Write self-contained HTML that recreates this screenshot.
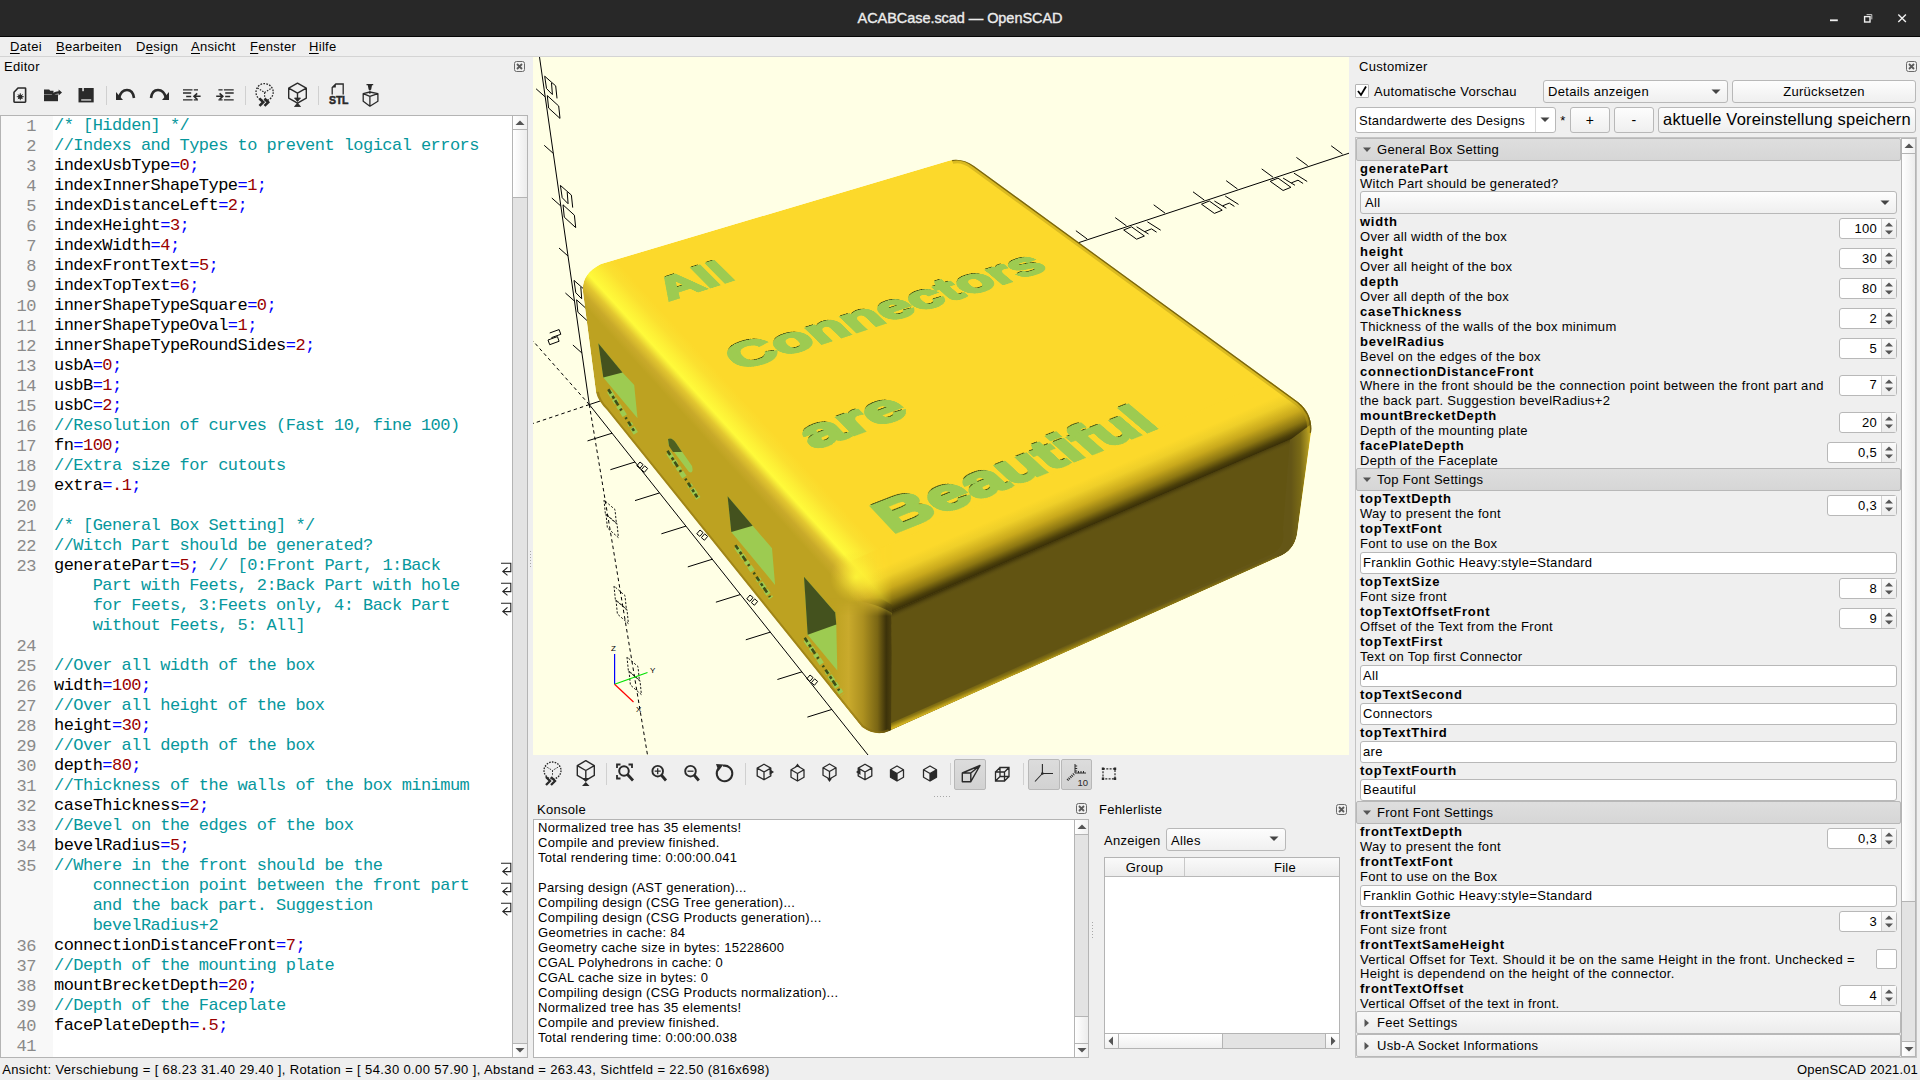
<!DOCTYPE html><html><head><meta charset="utf-8"><style>
html,body{margin:0;padding:0;}
body{width:1920px;height:1080px;position:relative;overflow:hidden;background:#efefef;font-family:'Liberation Sans',sans-serif;}
.a{position:absolute;}
.t{white-space:pre;}
u{text-decoration:underline;text-underline-offset:2px;}
</style></head><body>
<div class="a" style="left:0px;top:0px;width:1920px;height:37px;background:#282828;"></div>
<div class="a" style="left:0px;top:36px;width:1920px;height:1px;background:#050505;"></div>
<div class="a t" style="left:760.0px;top:8.46px;font-size:14.5px;color:#ececec;letter-spacing:-0.06px;line-height:20px;width:400px;text-align:center;-webkit-text-stroke:0.35px #ececec;">ACABCase.scad — OpenSCAD</div>
<svg class="a" style="left:1820px;top:0px" width="100" height="36"><line x1="10" y1="20.3" x2="17.8" y2="20.3" stroke="#f0f0f0" stroke-width="1.8"/><rect x="44.6" y="16.6" width="5.4" height="5.4" fill="none" stroke="#f0f0f0" stroke-width="1.4"/><path d="M46.6 14.6 H51.8 V19.4" fill="none" stroke="#c8c8c8" stroke-width="1"/><path d="M78.3 14.6 L85.9 21.9 M85.9 14.6 L78.3 21.9" stroke="#f0f0f0" stroke-width="1.4"/></svg>
<div class="a" style="left:0px;top:56px;width:1920px;height:1px;background:#d4d4d4;"></div>
<div class="a t" style="left:10px;top:37.00px;font-size:13px;color:#000;letter-spacing:0.3px;line-height:20px;"><u>D</u>atei</div>
<div class="a t" style="left:56px;top:37.00px;font-size:13px;color:#000;letter-spacing:0.3px;line-height:20px;"><u>B</u>earbeiten</div>
<div class="a t" style="left:136px;top:37.00px;font-size:13px;color:#000;letter-spacing:0.3px;line-height:20px;">D<u>e</u>sign</div>
<div class="a t" style="left:191px;top:37.00px;font-size:13px;color:#000;letter-spacing:0.3px;line-height:20px;"><u>A</u>nsicht</div>
<div class="a t" style="left:250px;top:37.00px;font-size:13px;color:#000;letter-spacing:0.3px;line-height:20px;"><u>F</u>enster</div>
<div class="a t" style="left:309px;top:37.00px;font-size:13px;color:#000;letter-spacing:0.3px;line-height:20px;"><u>H</u>ilfe</div>
<div class="a t" style="left:4px;top:57.00px;font-size:13px;color:#000;letter-spacing:0.3px;line-height:20px;">Editor</div>
<svg class="a" style="left:514px;top:61px" width="12" height="12"><rect x="0.5" y="0.5" width="10" height="10" rx="2" fill="none" stroke="#6a6a6a" stroke-width="1"/><path d="M3 3 L8 8 M8 3 L3 8" stroke="#5a5a5a" stroke-width="1.8"/></svg>
<svg class="a" style="left:13px;top:87px" width="15" height="17" viewBox="0 0 15 17"><path d="M1 5.2 L5 1 H12 Q12.6 1 12.6 1.6 V14.6 Q12.6 15.2 12 15.2 H1.6 Q1 15.2 1 14.6 Z" fill="none" stroke="#2a2a2a" stroke-width="1.6" stroke-linejoin="round"/><circle cx="7.3" cy="9.7" r="2.3" fill="#2a2a2a"/><path d="M7.3 6.2 V13.2 M3.8 9.7 H10.8 M4.9 7.3 L9.7 12.1 M9.7 7.3 L4.9 12.1" stroke="#2a2a2a" stroke-width="0.9"/></svg>
<svg class="a" style="left:43px;top:88px" width="20" height="15" viewBox="0 0 20 15"><path d="M1 1.5 H6.2 L7.2 2.8 H10.5 V6 H1 Z" fill="#2a2a2a"/><path d="M1 6.4 H15 V13.2 H1 Z" fill="#2a2a2a"/><path d="M9.5 7 Q12 4.3 16 4.3" fill="none" stroke="#2a2a2a" stroke-width="2.2"/><path d="M15.6 1.4 L19 4.4 L15.6 7.4 Z" fill="#2a2a2a"/></svg>
<svg class="a" style="left:78px;top:88px" width="16" height="15" viewBox="0 0 16 15"><path d="M0.5 -0.6 H15.7 V14.4 H0.5 Z" fill="#2a2a2a"/><rect x="4.3" y="-0.6" width="1.5" height="3.8" fill="#efefef"/><rect x="3.2" y="11.2" width="10" height="1.5" fill="#c8c8c8"/></svg>
<div class="a" style="left:106px;top:86px;width:1px;height:19px;background:#d0d0d0;"></div>
<svg class="a" style="left:116px;top:87px" width="20" height="16" viewBox="0 0 20 16"><path d="M3 11 Q5 3 11 3 Q17 3 18 11" fill="none" stroke="#2a2a2a" stroke-width="2.6"/><path d="M0 5 L7 13 L0 13 Z" fill="#2a2a2a"/></svg>
<svg class="a" style="left:149px;top:87px" width="20" height="16" viewBox="0 0 20 16"><path d="M2 11 Q3 3 9 3 Q15 3 17 11" fill="none" stroke="#2a2a2a" stroke-width="2.6"/><path d="M20 5 L13 13 L20 13 Z" fill="#2a2a2a"/></svg>
<svg class="a" style="left:182px;top:87px" width="20" height="16" viewBox="0 0 20 16"><path d="M1 2.9 H10.5 M11.8 2.9 H16 M1 6 H9.2 M4.2 9.5 H9.2 M1 12.9 H10.5 M11.8 12.9 H16" stroke="#2a2a2a" stroke-width="1.4"/><path d="M12.2 9.3 H18.6 M15.2 6.3 L12 9.3 L15.2 12.3" fill="none" stroke="#2a2a2a" stroke-width="1.6"/></svg>
<svg class="a" style="left:215px;top:87px" width="20" height="16" viewBox="0 0 20 16"><path d="M3.4 2.9 H7.6 M8.9 2.9 H18.7 M10.2 6 H18.7 M10.2 9.5 H15.2 M3.4 12.9 H7.6 M8.9 12.9 H18.7" stroke="#2a2a2a" stroke-width="1.4"/><path d="M1.2 9.3 H7.6 M4.6 6.3 L7.8 9.3 L4.6 12.3" fill="none" stroke="#2a2a2a" stroke-width="1.6"/></svg>
<div class="a" style="left:245px;top:86px;width:1px;height:19px;background:#d0d0d0;"></div>
<svg class="a" style="left:253px;top:80px" width="24" height="28" viewBox="0 0 24 28"><circle cx="11.6" cy="12.2" r="8.6" fill="none" stroke="#2a2a2a" stroke-width="1.3" stroke-dasharray="1.7 1.3"/><path d="M4.5 8 L11.6 12.5 L18.7 8 M11.6 12.5 V17" fill="none" stroke="#2a2a2a" stroke-width="1.2" stroke-dasharray="1.5 1.3"/><path d="M6.5 18.5 L10.2 22.2 L6.5 25.9 M11.5 18.5 L15.2 22.2 L11.5 25.9" fill="none" stroke="#2a2a2a" stroke-width="2.6"/></svg>
<svg class="a" style="left:287px;top:81px" width="22" height="28" viewBox="0 0 22 28"><path d="M10.5 2.2 L19.3 7.2 V17.2 L10.5 22.2 L1.7 17.2 V7.2 Z M1.7 7.2 L10.5 12.2 L19.3 7.2 M10.5 12.2 V17" fill="none" stroke="#2a2a2a" stroke-width="1.4" stroke-linejoin="round"/><path d="M7.5 17 H13.5 L10.5 20.5 Z M7.5 25.5 H13.5 L10.5 22 Z M10.5 15 V17" fill="#2a2a2a" stroke="#2a2a2a" stroke-width="0.8"/></svg>
<div class="a" style="left:318px;top:86px;width:1px;height:19px;background:#d0d0d0;"></div>
<svg class="a" style="left:327px;top:82px" width="24" height="24" viewBox="0 0 24 24"><path d="M5.2 12.5 V5.5 L8.8 2 H16.2 V12.5" fill="none" stroke="#2a2a2a" stroke-width="1.3"/><path d="M5.2 5.5 L8.8 2 V5.5 Z" fill="#2a2a2a"/><text x="11.7" y="22.4" font-family="Liberation Sans" font-weight="bold" font-size="10.5" text-anchor="middle" fill="#2a2a2a" stroke="#2a2a2a" stroke-width="0.5" letter-spacing="-0.2">STL</text></svg>
<svg class="a" style="left:361px;top:82px" width="19" height="26" viewBox="0 0 19 26"><path d="M5.5 1.9 H12.2 V3.2 H11 L10.2 7.6 Q8.9 9 7.6 7.6 L6.8 3.2 H5.5 Z" fill="#2a2a2a"/><path d="M8.9 8.5 V12" stroke="#2a2a2a" stroke-width="1"/><path d="M2.2 11.7 L8.9 10 L16.9 11.7 V19.3 L8.9 24.2 L2.2 19.3 Z M2.2 11.7 L8.9 14.4 L16.9 11.7 M8.9 14.4 V24.2" fill="none" stroke="#2a2a2a" stroke-width="1.3" stroke-linejoin="round"/></svg>
<div class="a" style="left:0px;top:115px;width:528px;height:943px;background:#ffffff;border:1px solid #b4b4b4;box-sizing:border-box;"></div>
<div class="a" style="left:1px;top:116px;width:52px;height:941px;background:#f8f8f8;"></div>
<div class="a" style="left:512px;top:115px;width:16px;height:943px;background:#e3e3e3;border:1px solid #b4b4b4;box-sizing:border-box;"></div>
<div class="a" style="left:512px;top:115px;width:16px;height:15px;background:linear-gradient(90deg,#ffffff,#f0f0f0);border:1px solid #b4b4b4;box-sizing:border-box;"></div>
<svg class="a" style="left:514px;top:118px" width="12" height="10"><path d="M1.5 7 L6 2.5 L10.5 7 Z" fill="#555"/></svg>
<div class="a" style="left:512px;top:129px;width:16px;height:69px;background:linear-gradient(90deg,#ffffff,#ececec);border:1px solid #b4b4b4;box-sizing:border-box;"></div>
<div class="a" style="left:512px;top:1043px;width:16px;height:15px;background:linear-gradient(90deg,#ffffff,#f0f0f0);border:1px solid #b4b4b4;box-sizing:border-box;"></div>
<svg class="a" style="left:514px;top:1045px" width="12" height="10"><path d="M1.5 3 L6 7.5 L10.5 3 Z" fill="#555"/></svg>
<div class="a t" style="left:2px;top:116.8px;width:33.8px;text-align:right;font-family:'Liberation Mono', monospace;font-size:17px;letter-spacing:-0.545px;line-height:20px;color:#8a8a8a">1</div>
<div class="a t" style="left:54px;top:116.0px;font-family:'Liberation Mono', monospace;font-size:17px;letter-spacing:-0.545px;line-height:20px;color:#000"><span style="color:#06979c">/* [Hidden] */</span></div>
<div class="a t" style="left:2px;top:136.8px;width:33.8px;text-align:right;font-family:'Liberation Mono', monospace;font-size:17px;letter-spacing:-0.545px;line-height:20px;color:#8a8a8a">2</div>
<div class="a t" style="left:54px;top:136.0px;font-family:'Liberation Mono', monospace;font-size:17px;letter-spacing:-0.545px;line-height:20px;color:#000"><span style="color:#06979c">//Indexs and Types to prevent logical errors</span></div>
<div class="a t" style="left:2px;top:156.8px;width:33.8px;text-align:right;font-family:'Liberation Mono', monospace;font-size:17px;letter-spacing:-0.545px;line-height:20px;color:#8a8a8a">3</div>
<div class="a t" style="left:54px;top:156.0px;font-family:'Liberation Mono', monospace;font-size:17px;letter-spacing:-0.545px;line-height:20px;color:#000">indexUsbType<span style="color:#0000ff">=</span><span style="color:#9a0000">0</span><span style="color:#0000ff">;</span></div>
<div class="a t" style="left:2px;top:176.8px;width:33.8px;text-align:right;font-family:'Liberation Mono', monospace;font-size:17px;letter-spacing:-0.545px;line-height:20px;color:#8a8a8a">4</div>
<div class="a t" style="left:54px;top:176.0px;font-family:'Liberation Mono', monospace;font-size:17px;letter-spacing:-0.545px;line-height:20px;color:#000">indexInnerShapeType<span style="color:#0000ff">=</span><span style="color:#9a0000">1</span><span style="color:#0000ff">;</span></div>
<div class="a t" style="left:2px;top:196.8px;width:33.8px;text-align:right;font-family:'Liberation Mono', monospace;font-size:17px;letter-spacing:-0.545px;line-height:20px;color:#8a8a8a">5</div>
<div class="a t" style="left:54px;top:196.0px;font-family:'Liberation Mono', monospace;font-size:17px;letter-spacing:-0.545px;line-height:20px;color:#000">indexDistanceLeft<span style="color:#0000ff">=</span><span style="color:#9a0000">2</span><span style="color:#0000ff">;</span></div>
<div class="a t" style="left:2px;top:216.8px;width:33.8px;text-align:right;font-family:'Liberation Mono', monospace;font-size:17px;letter-spacing:-0.545px;line-height:20px;color:#8a8a8a">6</div>
<div class="a t" style="left:54px;top:216.0px;font-family:'Liberation Mono', monospace;font-size:17px;letter-spacing:-0.545px;line-height:20px;color:#000">indexHeight<span style="color:#0000ff">=</span><span style="color:#9a0000">3</span><span style="color:#0000ff">;</span></div>
<div class="a t" style="left:2px;top:236.8px;width:33.8px;text-align:right;font-family:'Liberation Mono', monospace;font-size:17px;letter-spacing:-0.545px;line-height:20px;color:#8a8a8a">7</div>
<div class="a t" style="left:54px;top:236.0px;font-family:'Liberation Mono', monospace;font-size:17px;letter-spacing:-0.545px;line-height:20px;color:#000">indexWidth<span style="color:#0000ff">=</span><span style="color:#9a0000">4</span><span style="color:#0000ff">;</span></div>
<div class="a t" style="left:2px;top:256.8px;width:33.8px;text-align:right;font-family:'Liberation Mono', monospace;font-size:17px;letter-spacing:-0.545px;line-height:20px;color:#8a8a8a">8</div>
<div class="a t" style="left:54px;top:256.0px;font-family:'Liberation Mono', monospace;font-size:17px;letter-spacing:-0.545px;line-height:20px;color:#000">indexFrontText<span style="color:#0000ff">=</span><span style="color:#9a0000">5</span><span style="color:#0000ff">;</span></div>
<div class="a t" style="left:2px;top:276.8px;width:33.8px;text-align:right;font-family:'Liberation Mono', monospace;font-size:17px;letter-spacing:-0.545px;line-height:20px;color:#8a8a8a">9</div>
<div class="a t" style="left:54px;top:276.0px;font-family:'Liberation Mono', monospace;font-size:17px;letter-spacing:-0.545px;line-height:20px;color:#000">indexTopText<span style="color:#0000ff">=</span><span style="color:#9a0000">6</span><span style="color:#0000ff">;</span></div>
<div class="a t" style="left:2px;top:296.8px;width:33.8px;text-align:right;font-family:'Liberation Mono', monospace;font-size:17px;letter-spacing:-0.545px;line-height:20px;color:#8a8a8a">10</div>
<div class="a t" style="left:54px;top:296.0px;font-family:'Liberation Mono', monospace;font-size:17px;letter-spacing:-0.545px;line-height:20px;color:#000">innerShapeTypeSquare<span style="color:#0000ff">=</span><span style="color:#9a0000">0</span><span style="color:#0000ff">;</span></div>
<div class="a t" style="left:2px;top:316.8px;width:33.8px;text-align:right;font-family:'Liberation Mono', monospace;font-size:17px;letter-spacing:-0.545px;line-height:20px;color:#8a8a8a">11</div>
<div class="a t" style="left:54px;top:316.0px;font-family:'Liberation Mono', monospace;font-size:17px;letter-spacing:-0.545px;line-height:20px;color:#000">innerShapeTypeOval<span style="color:#0000ff">=</span><span style="color:#9a0000">1</span><span style="color:#0000ff">;</span></div>
<div class="a t" style="left:2px;top:336.8px;width:33.8px;text-align:right;font-family:'Liberation Mono', monospace;font-size:17px;letter-spacing:-0.545px;line-height:20px;color:#8a8a8a">12</div>
<div class="a t" style="left:54px;top:336.0px;font-family:'Liberation Mono', monospace;font-size:17px;letter-spacing:-0.545px;line-height:20px;color:#000">innerShapeTypeRoundSides<span style="color:#0000ff">=</span><span style="color:#9a0000">2</span><span style="color:#0000ff">;</span></div>
<div class="a t" style="left:2px;top:356.8px;width:33.8px;text-align:right;font-family:'Liberation Mono', monospace;font-size:17px;letter-spacing:-0.545px;line-height:20px;color:#8a8a8a">13</div>
<div class="a t" style="left:54px;top:356.0px;font-family:'Liberation Mono', monospace;font-size:17px;letter-spacing:-0.545px;line-height:20px;color:#000">usbA<span style="color:#0000ff">=</span><span style="color:#9a0000">0</span><span style="color:#0000ff">;</span></div>
<div class="a t" style="left:2px;top:376.8px;width:33.8px;text-align:right;font-family:'Liberation Mono', monospace;font-size:17px;letter-spacing:-0.545px;line-height:20px;color:#8a8a8a">14</div>
<div class="a t" style="left:54px;top:376.0px;font-family:'Liberation Mono', monospace;font-size:17px;letter-spacing:-0.545px;line-height:20px;color:#000">usbB<span style="color:#0000ff">=</span><span style="color:#9a0000">1</span><span style="color:#0000ff">;</span></div>
<div class="a t" style="left:2px;top:396.8px;width:33.8px;text-align:right;font-family:'Liberation Mono', monospace;font-size:17px;letter-spacing:-0.545px;line-height:20px;color:#8a8a8a">15</div>
<div class="a t" style="left:54px;top:396.0px;font-family:'Liberation Mono', monospace;font-size:17px;letter-spacing:-0.545px;line-height:20px;color:#000">usbC<span style="color:#0000ff">=</span><span style="color:#9a0000">2</span><span style="color:#0000ff">;</span></div>
<div class="a t" style="left:2px;top:416.8px;width:33.8px;text-align:right;font-family:'Liberation Mono', monospace;font-size:17px;letter-spacing:-0.545px;line-height:20px;color:#8a8a8a">16</div>
<div class="a t" style="left:54px;top:416.0px;font-family:'Liberation Mono', monospace;font-size:17px;letter-spacing:-0.545px;line-height:20px;color:#000"><span style="color:#06979c">//Resolution of curves (Fast 10, fine 100)</span></div>
<div class="a t" style="left:2px;top:436.8px;width:33.8px;text-align:right;font-family:'Liberation Mono', monospace;font-size:17px;letter-spacing:-0.545px;line-height:20px;color:#8a8a8a">17</div>
<div class="a t" style="left:54px;top:436.0px;font-family:'Liberation Mono', monospace;font-size:17px;letter-spacing:-0.545px;line-height:20px;color:#000">fn<span style="color:#0000ff">=</span><span style="color:#9a0000">100</span><span style="color:#0000ff">;</span></div>
<div class="a t" style="left:2px;top:456.8px;width:33.8px;text-align:right;font-family:'Liberation Mono', monospace;font-size:17px;letter-spacing:-0.545px;line-height:20px;color:#8a8a8a">18</div>
<div class="a t" style="left:54px;top:456.0px;font-family:'Liberation Mono', monospace;font-size:17px;letter-spacing:-0.545px;line-height:20px;color:#000"><span style="color:#06979c">//Extra size for cutouts</span></div>
<div class="a t" style="left:2px;top:476.8px;width:33.8px;text-align:right;font-family:'Liberation Mono', monospace;font-size:17px;letter-spacing:-0.545px;line-height:20px;color:#8a8a8a">19</div>
<div class="a t" style="left:54px;top:476.0px;font-family:'Liberation Mono', monospace;font-size:17px;letter-spacing:-0.545px;line-height:20px;color:#000">extra<span style="color:#0000ff">=</span><span style="color:#9a0000">.1</span><span style="color:#0000ff">;</span></div>
<div class="a t" style="left:2px;top:496.8px;width:33.8px;text-align:right;font-family:'Liberation Mono', monospace;font-size:17px;letter-spacing:-0.545px;line-height:20px;color:#8a8a8a">20</div>
<div class="a t" style="left:54px;top:496.0px;font-family:'Liberation Mono', monospace;font-size:17px;letter-spacing:-0.545px;line-height:20px;color:#000"></div>
<div class="a t" style="left:2px;top:516.8px;width:33.8px;text-align:right;font-family:'Liberation Mono', monospace;font-size:17px;letter-spacing:-0.545px;line-height:20px;color:#8a8a8a">21</div>
<div class="a t" style="left:54px;top:516.0px;font-family:'Liberation Mono', monospace;font-size:17px;letter-spacing:-0.545px;line-height:20px;color:#000"><span style="color:#06979c">/* [General Box Setting] */</span></div>
<div class="a t" style="left:2px;top:536.8px;width:33.8px;text-align:right;font-family:'Liberation Mono', monospace;font-size:17px;letter-spacing:-0.545px;line-height:20px;color:#8a8a8a">22</div>
<div class="a t" style="left:54px;top:536.0px;font-family:'Liberation Mono', monospace;font-size:17px;letter-spacing:-0.545px;line-height:20px;color:#000"><span style="color:#06979c">//Witch Part should be generated?</span></div>
<div class="a t" style="left:2px;top:556.8px;width:33.8px;text-align:right;font-family:'Liberation Mono', monospace;font-size:17px;letter-spacing:-0.545px;line-height:20px;color:#8a8a8a">23</div>
<div class="a t" style="left:54px;top:556.0px;font-family:'Liberation Mono', monospace;font-size:17px;letter-spacing:-0.545px;line-height:20px;color:#000">generatePart<span style="color:#0000ff">=</span><span style="color:#9a0000">5</span><span style="color:#0000ff">;</span> <span style="color:#06979c">// [0:Front Part, 1:Back</span></div>
<svg class="a" style="left:500px;top:561px" width="12" height="16"><path d="M1 2.2 H10.8 V10.6 H2.8 M7.5 6.4 L2.8 10.6 L7.5 14.4" fill="none" stroke="#222" stroke-width="1.1"/></svg>
<div class="a t" style="left:54px;top:576.0px;font-family:'Liberation Mono', monospace;font-size:17px;letter-spacing:-0.545px;line-height:20px;color:#000"><span style="color:#06979c">    Part with Feets, 2:Back Part with hole</span></div>
<svg class="a" style="left:500px;top:581px" width="12" height="16"><path d="M1 2.2 H10.8 V10.6 H2.8 M7.5 6.4 L2.8 10.6 L7.5 14.4" fill="none" stroke="#222" stroke-width="1.1"/></svg>
<div class="a t" style="left:54px;top:596.0px;font-family:'Liberation Mono', monospace;font-size:17px;letter-spacing:-0.545px;line-height:20px;color:#000"><span style="color:#06979c">    for Feets, 3:Feets only, 4: Back Part</span></div>
<svg class="a" style="left:500px;top:601px" width="12" height="16"><path d="M1 2.2 H10.8 V10.6 H2.8 M7.5 6.4 L2.8 10.6 L7.5 14.4" fill="none" stroke="#222" stroke-width="1.1"/></svg>
<div class="a t" style="left:54px;top:616.0px;font-family:'Liberation Mono', monospace;font-size:17px;letter-spacing:-0.545px;line-height:20px;color:#000"><span style="color:#06979c">    without Feets, 5: All]</span></div>
<div class="a t" style="left:2px;top:636.8px;width:33.8px;text-align:right;font-family:'Liberation Mono', monospace;font-size:17px;letter-spacing:-0.545px;line-height:20px;color:#8a8a8a">24</div>
<div class="a t" style="left:54px;top:636.0px;font-family:'Liberation Mono', monospace;font-size:17px;letter-spacing:-0.545px;line-height:20px;color:#000"></div>
<div class="a t" style="left:2px;top:656.8px;width:33.8px;text-align:right;font-family:'Liberation Mono', monospace;font-size:17px;letter-spacing:-0.545px;line-height:20px;color:#8a8a8a">25</div>
<div class="a t" style="left:54px;top:656.0px;font-family:'Liberation Mono', monospace;font-size:17px;letter-spacing:-0.545px;line-height:20px;color:#000"><span style="color:#06979c">//Over all width of the box</span></div>
<div class="a t" style="left:2px;top:676.8px;width:33.8px;text-align:right;font-family:'Liberation Mono', monospace;font-size:17px;letter-spacing:-0.545px;line-height:20px;color:#8a8a8a">26</div>
<div class="a t" style="left:54px;top:676.0px;font-family:'Liberation Mono', monospace;font-size:17px;letter-spacing:-0.545px;line-height:20px;color:#000">width<span style="color:#0000ff">=</span><span style="color:#9a0000">100</span><span style="color:#0000ff">;</span></div>
<div class="a t" style="left:2px;top:696.8px;width:33.8px;text-align:right;font-family:'Liberation Mono', monospace;font-size:17px;letter-spacing:-0.545px;line-height:20px;color:#8a8a8a">27</div>
<div class="a t" style="left:54px;top:696.0px;font-family:'Liberation Mono', monospace;font-size:17px;letter-spacing:-0.545px;line-height:20px;color:#000"><span style="color:#06979c">//Over all height of the box</span></div>
<div class="a t" style="left:2px;top:716.8px;width:33.8px;text-align:right;font-family:'Liberation Mono', monospace;font-size:17px;letter-spacing:-0.545px;line-height:20px;color:#8a8a8a">28</div>
<div class="a t" style="left:54px;top:716.0px;font-family:'Liberation Mono', monospace;font-size:17px;letter-spacing:-0.545px;line-height:20px;color:#000">height<span style="color:#0000ff">=</span><span style="color:#9a0000">30</span><span style="color:#0000ff">;</span></div>
<div class="a t" style="left:2px;top:736.8px;width:33.8px;text-align:right;font-family:'Liberation Mono', monospace;font-size:17px;letter-spacing:-0.545px;line-height:20px;color:#8a8a8a">29</div>
<div class="a t" style="left:54px;top:736.0px;font-family:'Liberation Mono', monospace;font-size:17px;letter-spacing:-0.545px;line-height:20px;color:#000"><span style="color:#06979c">//Over all depth of the box</span></div>
<div class="a t" style="left:2px;top:756.8px;width:33.8px;text-align:right;font-family:'Liberation Mono', monospace;font-size:17px;letter-spacing:-0.545px;line-height:20px;color:#8a8a8a">30</div>
<div class="a t" style="left:54px;top:756.0px;font-family:'Liberation Mono', monospace;font-size:17px;letter-spacing:-0.545px;line-height:20px;color:#000">depth<span style="color:#0000ff">=</span><span style="color:#9a0000">80</span><span style="color:#0000ff">;</span></div>
<div class="a t" style="left:2px;top:776.8px;width:33.8px;text-align:right;font-family:'Liberation Mono', monospace;font-size:17px;letter-spacing:-0.545px;line-height:20px;color:#8a8a8a">31</div>
<div class="a t" style="left:54px;top:776.0px;font-family:'Liberation Mono', monospace;font-size:17px;letter-spacing:-0.545px;line-height:20px;color:#000"><span style="color:#06979c">//Thickness of the walls of the box minimum</span></div>
<div class="a t" style="left:2px;top:796.8px;width:33.8px;text-align:right;font-family:'Liberation Mono', monospace;font-size:17px;letter-spacing:-0.545px;line-height:20px;color:#8a8a8a">32</div>
<div class="a t" style="left:54px;top:796.0px;font-family:'Liberation Mono', monospace;font-size:17px;letter-spacing:-0.545px;line-height:20px;color:#000">caseThickness<span style="color:#0000ff">=</span><span style="color:#9a0000">2</span><span style="color:#0000ff">;</span></div>
<div class="a t" style="left:2px;top:816.8px;width:33.8px;text-align:right;font-family:'Liberation Mono', monospace;font-size:17px;letter-spacing:-0.545px;line-height:20px;color:#8a8a8a">33</div>
<div class="a t" style="left:54px;top:816.0px;font-family:'Liberation Mono', monospace;font-size:17px;letter-spacing:-0.545px;line-height:20px;color:#000"><span style="color:#06979c">//Bevel on the edges of the box</span></div>
<div class="a t" style="left:2px;top:836.8px;width:33.8px;text-align:right;font-family:'Liberation Mono', monospace;font-size:17px;letter-spacing:-0.545px;line-height:20px;color:#8a8a8a">34</div>
<div class="a t" style="left:54px;top:836.0px;font-family:'Liberation Mono', monospace;font-size:17px;letter-spacing:-0.545px;line-height:20px;color:#000">bevelRadius<span style="color:#0000ff">=</span><span style="color:#9a0000">5</span><span style="color:#0000ff">;</span></div>
<div class="a t" style="left:2px;top:856.8px;width:33.8px;text-align:right;font-family:'Liberation Mono', monospace;font-size:17px;letter-spacing:-0.545px;line-height:20px;color:#8a8a8a">35</div>
<div class="a t" style="left:54px;top:856.0px;font-family:'Liberation Mono', monospace;font-size:17px;letter-spacing:-0.545px;line-height:20px;color:#000"><span style="color:#06979c">//Where in the front should be the</span></div>
<svg class="a" style="left:500px;top:861px" width="12" height="16"><path d="M1 2.2 H10.8 V10.6 H2.8 M7.5 6.4 L2.8 10.6 L7.5 14.4" fill="none" stroke="#222" stroke-width="1.1"/></svg>
<div class="a t" style="left:54px;top:876.0px;font-family:'Liberation Mono', monospace;font-size:17px;letter-spacing:-0.545px;line-height:20px;color:#000"><span style="color:#06979c">    connection point between the front part</span></div>
<svg class="a" style="left:500px;top:881px" width="12" height="16"><path d="M1 2.2 H10.8 V10.6 H2.8 M7.5 6.4 L2.8 10.6 L7.5 14.4" fill="none" stroke="#222" stroke-width="1.1"/></svg>
<div class="a t" style="left:54px;top:896.0px;font-family:'Liberation Mono', monospace;font-size:17px;letter-spacing:-0.545px;line-height:20px;color:#000"><span style="color:#06979c">    and the back part. Suggestion</span></div>
<svg class="a" style="left:500px;top:901px" width="12" height="16"><path d="M1 2.2 H10.8 V10.6 H2.8 M7.5 6.4 L2.8 10.6 L7.5 14.4" fill="none" stroke="#222" stroke-width="1.1"/></svg>
<div class="a t" style="left:54px;top:916.0px;font-family:'Liberation Mono', monospace;font-size:17px;letter-spacing:-0.545px;line-height:20px;color:#000"><span style="color:#06979c">    bevelRadius+2</span></div>
<div class="a t" style="left:2px;top:936.8px;width:33.8px;text-align:right;font-family:'Liberation Mono', monospace;font-size:17px;letter-spacing:-0.545px;line-height:20px;color:#8a8a8a">36</div>
<div class="a t" style="left:54px;top:936.0px;font-family:'Liberation Mono', monospace;font-size:17px;letter-spacing:-0.545px;line-height:20px;color:#000">connectionDistanceFront<span style="color:#0000ff">=</span><span style="color:#9a0000">7</span><span style="color:#0000ff">;</span></div>
<div class="a t" style="left:2px;top:956.8px;width:33.8px;text-align:right;font-family:'Liberation Mono', monospace;font-size:17px;letter-spacing:-0.545px;line-height:20px;color:#8a8a8a">37</div>
<div class="a t" style="left:54px;top:956.0px;font-family:'Liberation Mono', monospace;font-size:17px;letter-spacing:-0.545px;line-height:20px;color:#000"><span style="color:#06979c">//Depth of the mounting plate</span></div>
<div class="a t" style="left:2px;top:976.8px;width:33.8px;text-align:right;font-family:'Liberation Mono', monospace;font-size:17px;letter-spacing:-0.545px;line-height:20px;color:#8a8a8a">38</div>
<div class="a t" style="left:54px;top:976.0px;font-family:'Liberation Mono', monospace;font-size:17px;letter-spacing:-0.545px;line-height:20px;color:#000">mountBrecketDepth<span style="color:#0000ff">=</span><span style="color:#9a0000">20</span><span style="color:#0000ff">;</span></div>
<div class="a t" style="left:2px;top:996.8px;width:33.8px;text-align:right;font-family:'Liberation Mono', monospace;font-size:17px;letter-spacing:-0.545px;line-height:20px;color:#8a8a8a">39</div>
<div class="a t" style="left:54px;top:996.0px;font-family:'Liberation Mono', monospace;font-size:17px;letter-spacing:-0.545px;line-height:20px;color:#000"><span style="color:#06979c">//Depth of the Faceplate</span></div>
<div class="a t" style="left:2px;top:1016.8px;width:33.8px;text-align:right;font-family:'Liberation Mono', monospace;font-size:17px;letter-spacing:-0.545px;line-height:20px;color:#8a8a8a">40</div>
<div class="a t" style="left:54px;top:1016.0px;font-family:'Liberation Mono', monospace;font-size:17px;letter-spacing:-0.545px;line-height:20px;color:#000">facePlateDepth<span style="color:#0000ff">=</span><span style="color:#9a0000">.5</span><span style="color:#0000ff">;</span></div>
<div class="a t" style="left:2px;top:1036.8px;width:33.8px;text-align:right;font-family:'Liberation Mono', monospace;font-size:17px;letter-spacing:-0.545px;line-height:20px;color:#8a8a8a">41</div>
<div class="a t" style="left:54px;top:1036.0px;font-family:'Liberation Mono', monospace;font-size:17px;letter-spacing:-0.545px;line-height:20px;color:#000"></div>
<div class="a" style="left:533px;top:57px;width:816px;height:698px;background:#ffffe5;overflow:hidden">
<svg class="a" style="left:0;top:0" width="816" height="698" viewBox="533 57 816 698"><defs><linearGradient id="bandL" gradientUnits="userSpaceOnUse" x1="685.1" y1="416.2" x2="724.9" y2="379.8"><stop offset="0" stop-color="#bda221"/><stop offset="0.15" stop-color="#c9aa2a"/><stop offset="0.3" stop-color="#e2c630"/><stop offset="0.45" stop-color="#fffa3a"/><stop offset="0.6" stop-color="#fdf036"/><stop offset="0.8" stop-color="#fbe030"/><stop offset="1" stop-color="#fcd92b"/></linearGradient><linearGradient id="bandF" gradientUnits="userSpaceOnUse" x1="1082.5" y1="480.7" x2="1100" y2="521.1"><stop offset="0" stop-color="#fcd92b"/><stop offset="0.22" stop-color="#efcf29"/><stop offset="0.5" stop-color="#c9a91c"/><stop offset="0.75" stop-color="#8c7612"/><stop offset="0.92" stop-color="#4c400a"/><stop offset="1" stop-color="#3a3008"/></linearGradient><linearGradient id="colC" gradientUnits="userSpaceOnUse" x1="834" y1="0" x2="892" y2="0"><stop offset="0" stop-color="#bda221"/><stop offset="0.25" stop-color="#c9aa2c"/><stop offset="0.5" stop-color="#ac9020"/><stop offset="0.75" stop-color="#7a6614"/><stop offset="0.9" stop-color="#3c320a"/><stop offset="1" stop-color="#4e420e"/></linearGradient><linearGradient id="capC" gradientUnits="userSpaceOnUse" x1="850" y1="575" x2="885" y2="610"><stop offset="0" stop-color="#f0d430" stop-opacity="0"/><stop offset="1" stop-color="#7a6a14" stop-opacity="0.8"/></linearGradient><linearGradient id="colR" gradientUnits="userSpaceOnUse" x1="1291" y1="0" x2="1310" y2="0"><stop offset="0" stop-color="#645616"/><stop offset="0.5" stop-color="#7a6a16"/><stop offset="0.85" stop-color="#a89220"/><stop offset="1" stop-color="#c4aa24"/></linearGradient><linearGradient id="botF" gradientUnits="userSpaceOnUse" x1="1083" y1="638" x2="1086" y2="645"><stop offset="0" stop-color="#645616"/><stop offset="0.5" stop-color="#8a7612"/><stop offset="1" stop-color="#d0b020"/></linearGradient><linearGradient id="creaseF" gradientUnits="userSpaceOnUse" x1="1100" y1="521.1" x2="1102.8" y2="527.5"><stop offset="0" stop-color="#3a3008" stop-opacity="0.9"/><stop offset="1" stop-color="#645616" stop-opacity="0"/></linearGradient><linearGradient id="mgradL" gradientUnits="userSpaceOnUse" x1="848" y1="0" x2="892" y2="0"><stop offset="0" stop-color="#000"/><stop offset="1" stop-color="#fff"/></linearGradient><linearGradient id="mgradT" gradientUnits="userSpaceOnUse" x1="0" y1="598" x2="0" y2="616"><stop offset="0" stop-color="#000"/><stop offset="1" stop-color="#fff"/></linearGradient><radialGradient id="capHi" gradientUnits="userSpaceOnUse" cx="856" cy="577" r="26"><stop offset="0" stop-color="#fff838" stop-opacity="0.85"/><stop offset="0.5" stop-color="#fbe834" stop-opacity="0.45"/><stop offset="1" stop-color="#f0d030" stop-opacity="0"/></radialGradient></defs><g stroke="#000" stroke-width="1" fill="none"><line x1="589.3" y1="404.6" x2="539.5" y2="57"/><line x1="589.3" y1="404.6" x2="1349" y2="153.2"/><line x1="589.3" y1="404.6" x2="868" y2="755"/></g><g stroke="#000" stroke-width="1" fill="none" stroke-dasharray="3.5 3"><line x1="589.3" y1="404.6" x2="647.5" y2="755"/><line x1="589.3" y1="404.6" x2="533" y2="341"/><line x1="589.3" y1="404.6" x2="533" y2="423.5"/></g><path d="M1087.2 239.0 l-11.3 -8.3 M1126.5 225.9 l-11.3 -8.3 M1165.0 213.1 l-11.3 -8.3 M1204.3 200.1 l-11.3 -8.3 M1237.5 189.0 l-11.3 -8.3 M1273.0 177.2 l-11.3 -8.3 M1307.7 165.7 l-11.3 -8.3 M1342.5 154.1 l-11.3 -8.3 M612.1 433.2 l-24.6 7.7 M635.0 462.0 l-24.6 7.7 M659.6 492.9 l-24.6 7.7 M686.0 526.1 l-24.6 7.7 M712.4 559.2 l-24.6 7.7 M740.5 594.5 l-24.6 7.7 M770.4 632.1 l-24.6 7.7 M802.0 671.8 l-24.6 7.7 M832.0 709.4 l-24.6 7.7 M545.1 96.8 l-9 -8 M553.2 153.3 l-9 -8 M560.8 206.0 l-9 -8 M568.0 256.0 l-9 -8 M574.4 301.0 l-9 -8 M581.9 353.0 l-9 -8" stroke="#000" stroke-width="1" fill="none"/><path d="M1123.7 230.0 l7.8 -3.2 l12.9 9.2 l-7.8 3.2 Z M1136.6 226.8 l11.9 7.2 M1144.8 231.6 l6.7 -2.7 l5.1 3.3 M1147.4 221.8 l13.3 8.4 M1201.5 204.2 l7.8 -3.2 l12.9 9.2 l-7.8 3.2 Z M1214.4 201.0 l11.9 7.2 M1222.6 205.8 l6.7 -2.7 l5.1 3.3 M1225.2 196.0 l13.3 8.4 M1270.2 181.3 l7.8 -3.2 l12.9 9.2 l-7.8 3.2 Z M1283.1 178.1 l11.9 7.2 M1291.3 182.9 l6.7 -2.7 l5.1 3.3 M1293.9 173.1 l13.3 8.4 M547.3 95.6 l11.4 10.4 l1.3 12.4 l-11.4 -10.4 Z M544.7 76.2 l1.8 12.3 l5.8 6 M544.7 76.2 l11 9.7 l1.3 12.5 M551.5 82.9 l0.9 11.6 M563.0 204.8 l11.4 10.4 l1.3 12.4 l-11.4 -10.4 Z M560.4 185.4 l1.8 12.3 l5.8 6 M560.4 185.4 l11 9.7 l1.3 12.5 M567.2 192.1 l0.9 11.6 M576.6 299.8 l11.4 10.4 l1.3 12.4 l-11.4 -10.4 Z M574.0 280.4 l1.8 12.3 l5.8 6 M574.0 280.4 l11 9.7 l1.3 12.5 M580.8 287.1 l0.9 11.6" stroke="#000" stroke-width="1" fill="none"/><g transform="translate(640,462) rotate(40)" stroke="#000" stroke-width="0.9" fill="none"><path d="M0 0 h4 v5 h-4 z M6 0 h4 v5 h-4 z"/></g><g transform="translate(700,530) rotate(40)" stroke="#000" stroke-width="0.9" fill="none"><path d="M0 0 h4 v5 h-4 z M6 0 h4 v5 h-4 z"/></g><g transform="translate(750,595) rotate(40)" stroke="#000" stroke-width="0.9" fill="none"><path d="M0 0 h4 v5 h-4 z M6 0 h4 v5 h-4 z"/></g><g transform="translate(810,675) rotate(40)" stroke="#000" stroke-width="0.9" fill="none"><path d="M0 0 h4 v5 h-4 z M6 0 h4 v5 h-4 z"/></g><path d="M604 500 l1.4 14 l11 9.6 l-1.4 -14 Z M606 514 l1.4 14 l11 9.6 l-1.4 -14 Z" stroke="#000" stroke-width="0.9" fill="none" stroke-dasharray="2.2 1.6"/><path d="M614 586 l1.4 14 l11 9.6 l-1.4 -14 Z M616 600 l1.4 14 l11 9.6 l-1.4 -14 Z" stroke="#000" stroke-width="0.9" fill="none" stroke-dasharray="2.2 1.6"/><path d="M627 657 l1.4 14 l11 9.6 l-1.4 -14 Z M629 671 l1.4 14 l11 9.6 l-1.4 -14 Z" stroke="#000" stroke-width="0.9" fill="none" stroke-dasharray="2.2 1.6"/><g transform="translate(548,340) rotate(-20)" stroke="#000" stroke-width="0.9" fill="none"><path d="M0 0 h10 v5 h-10 z M4 -6 h10 v5 h-10"/></g><clipPath id="silc"><path d="M583 292 Q581 274 601 264 L948 161 Q961 157 974 166 L1298 402 Q1313 414 1311 433 L1297 534 Q1294 551 1278 557 L889 731 Q876 737 862 727 L607 410 Q598 401 596 392 Z"/></clipPath><g clip-path="url(#silc)"><path d="M583 292 Q581 274 601 264 L948 161 Q961 157 974 166 L1298 402 Q1313 414 1311 433 L1297 534 Q1294 551 1278 557 L889 731 Q876 737 862 727 L607 410 Q598 401 596 392 Z" fill="url(#bandL)"/><mask id="fadeL" maskUnits="userSpaceOnUse" x="533" y="57" width="816" height="698"><rect x="533" y="57" width="816" height="698" fill="url(#mgradL)"/></mask><path d="M830 570 L1290 372 L1320 400 L1311 432.0 L892 613 Q872 600 830 598 Z" fill="url(#bandF)" mask="url(#fadeL)"/><path d="M892 611.5 L1307 432.2 L1297 534 Q1294 551 1278 557 L889 731 Z" fill="#625412"/><path d="M892 611.5 L1307 432.2 L1306 441.2 L892 620 Z" fill="url(#creaseF)"/><path d="M1290 440.1 L1312 423.6 L1297 534 Q1294 551 1278 557 L1274 553 Q1286 545 1283 530 Z" fill="url(#colR)"/><path d="M889 724 L1274 553 L1278 557 L889 731 Z" fill="url(#botF)"/><mask id="fadeT" maskUnits="userSpaceOnUse" x="533" y="57" width="816" height="698"><rect x="533" y="57" width="816" height="698" fill="url(#mgradT)"/></mask><path d="M830 585 Q870 590 892 605 L891 731 Q877 737 862 727 L830 688 Z" fill="url(#colC)" mask="url(#fadeT)"/><circle cx="856" cy="577" r="26" fill="url(#capHi)"/><path d="M952 160 Q962 157 974 166 L1298 402 Q1313 414 1311 433" fill="none" stroke="#b89c18" stroke-width="8" opacity="0.5"/><path d="M952 160 Q962 157 974 166 L1298 402 Q1313 414 1311 433" fill="none" stroke="#5a4a08" stroke-width="2.6" opacity="0.75"/><path d="M597 392 Q598 401 607 410 L862 727 Q876 737 889 731" fill="none" stroke="#8a7010" stroke-width="4" opacity="0.55"/></g><path d="M598.3 343.3 L622.5 372.5 L634.2 385.0 L637.5 418.3 L603.3 377.5 Z" fill="#9dcb51"/><path d="M598.3 343.3 L622.5 372.5 L603.3 377.5 Z" fill="#44521e"/><path d="M727.6 496.2 L752.7 525.8 L772.0 548.2 L775.1 584.9 L731.3 531.9 Z" fill="#9dcb51"/><path d="M727.6 496.2 L752.7 525.8 L731.3 531.9 Z" fill="#44521e"/><path d="M804.0 576.7 L835.2 612.4 L836.3 624.6 L837.3 670.5 L807.7 634.8 Z" fill="#9dcb51"/><path d="M804.0 576.7 L835.2 612.4 L836.3 624.6 L807.7 634.8 Z" fill="#44521e"/><path d="M668 439 Q672 437 676 443 L692 466 Q694 474 689 472 L671 448 Q667 444 668 439 Z" fill="#9dcb51"/><path d="M668 439 Q672 437 676 443 L682 452 L673 452 L669 446 Z" fill="#4e6020"/><path d="M609.3 391.2 L635.8 433.3" stroke="#9dcb51" stroke-width="5" stroke-dasharray="7 2 5 3 4 2 6 9 3 2"/><path d="M608.3 389.2 L634.8 432.3" stroke="#3c5018" stroke-width="2.6" stroke-dasharray="5 3 3 2 6 4 2 8 2 3"/><path d="M668.5 452.8 L698.3 498.3" stroke="#9dcb51" stroke-width="5" stroke-dasharray="7 2 5 3 4 2 6 9 3 2"/><path d="M667.5 450.8 L697.3 497.3" stroke="#3c5018" stroke-width="2.6" stroke-dasharray="5 3 3 2 6 4 2 8 2 3"/><path d="M736.4 547.1 L771.0 598.0" stroke="#9dcb51" stroke-width="5" stroke-dasharray="7 2 5 3 4 2 6 9 3 2"/><path d="M735.4 545.1 L770.0 597.0" stroke="#3c5018" stroke-width="2.6" stroke-dasharray="5 3 3 2 6 4 2 8 2 3"/><path d="M805.7 639.8 L842.4 694.9" stroke="#9dcb51" stroke-width="5" stroke-dasharray="7 2 5 3 4 2 6 9 3 2"/><path d="M804.7 637.8 L841.4 693.9" stroke="#3c5018" stroke-width="2.6" stroke-dasharray="5 3 3 2 6 4 2 8 2 3"/><line x1="614.6" y1="684.3" x2="614.6" y2="654" stroke="#0000ff" stroke-width="1.2"/><line x1="614.6" y1="684.3" x2="647.5" y2="672.5" stroke="#00e000" stroke-width="1.2"/><line x1="614.6" y1="684.3" x2="633.5" y2="702" stroke="#ff0000" stroke-width="1.2"/><text x="611" y="651" font-size="8" font-family="Liberation Sans" fill="#000">Z</text><text x="650" y="673" font-size="8" font-family="Liberation Sans" fill="#000">Y</text><text x="636" y="712" font-size="8" font-family="Liberation Sans" fill="#000">X</text></svg>
<div class="a" style="left:0;top:0;width:1000px;height:800px;transform-origin:0 0;transform:matrix3d(0.421257541,-0.108427941,0,0.000103647637,0.287492703,0.276160136,0,-0.000252869791,0,0,1,0,50,221,0,1)">
<div class="a t" style="left:120px;top:48.3px;font-family:'Liberation Sans';font-weight:bold;font-size:80px;line-height:80px;color:#9dcb51;-webkit-text-stroke:5px #9dcb51;text-shadow:0 -4px 0 #3e4c12;transform-origin:0 67.7px;transform:rotate(0.3deg) scaleX(1.62)">All</div>
<div class="a t" style="left:127px;top:244.3px;font-family:'Liberation Sans';font-weight:bold;font-size:80px;line-height:80px;color:#9dcb51;-webkit-text-stroke:5px #9dcb51;text-shadow:0 -4px 0 #3e4c12;transform-origin:0 67.7px;transform:rotate(1.2deg) scaleX(1.73)">Connectors</div>
<div class="a t" style="left:125px;top:440.3px;font-family:'Liberation Sans';font-weight:bold;font-size:80px;line-height:80px;color:#9dcb51;-webkit-text-stroke:5px #9dcb51;text-shadow:0 -4px 0 #3e4c12;transform-origin:0 67.7px;transform:rotate(0.6deg) scaleX(1.85)">are</div>
<div class="a t" style="left:122px;top:626.3px;font-family:'Liberation Sans';font-weight:bold;font-size:80px;line-height:80px;color:#9dcb51;-webkit-text-stroke:5px #9dcb51;text-shadow:0 -4px 0 #3e4c12;transform-origin:0 67.7px;transform:rotate(0.5deg) scaleX(1.82)">Beautiful</div>
</div>
</div>
<div class="a" style="left:954px;top:759px;width:32px;height:31px;background:linear-gradient(#dcdcdc,#d2d2d2);border:1px solid #b8b8b8;box-sizing:border-box;border-radius:2px;"></div>
<div class="a" style="left:1028px;top:759px;width:32px;height:31px;background:linear-gradient(#dcdcdc,#d2d2d2);border:1px solid #b8b8b8;box-sizing:border-box;border-radius:2px;"></div>
<div class="a" style="left:1061px;top:759px;width:31px;height:31px;background:linear-gradient(#dcdcdc,#d2d2d2);border:1px solid #b8b8b8;box-sizing:border-box;border-radius:2px;"></div>
<div class="a" style="left:606px;top:763px;width:1px;height:22px;background:#d0d0d0;"></div>
<div class="a" style="left:745px;top:763px;width:1px;height:22px;background:#d0d0d0;"></div>
<div class="a" style="left:950px;top:763px;width:1px;height:22px;background:#d0d0d0;"></div>
<div class="a" style="left:1023px;top:763px;width:1px;height:22px;background:#d0d0d0;"></div>
<svg class="a" style="left:533px;top:757px" width="600" height="36" viewBox="0 0 600 36"><g transform="translate(-533,-757)"><circle cx="552.5" cy="770.5" r="8.5" fill="none" stroke="#2a2a2a" stroke-width="1.3" stroke-dasharray="1.6 1.2"/><path d="M545 766 L552.5 770.5 L560 766 M552.5 770.5 V776" fill="none" stroke="#2a2a2a" stroke-width="1" stroke-dasharray="1.5 1.2"/><path d="M546 777 L550 781 L546 785 M551 777 L555 781 L551 785" fill="none" stroke="#2a2a2a" stroke-width="2.3"/><path d="M585.8 760.7 L594.3 765.6 L594.3 775.4 L585.8 780.3 L577.3 775.4 L577.3 765.6 Z M577.3 765.6 L585.8 770.5 L594.3 765.6 M585.8 770.5 L585.8 780.3" fill="none" stroke="#2a2a2a" stroke-width="1.4" stroke-linejoin="round"/><path d="M582 778 H589.5 L585.8 782 Z M582 786 H589.5 L585.8 782 Z" fill="#2a2a2a"/><path d="M617 768 V764.5 H620.5 M628.5 764.5 H632 V768 M617 775 V778.5 H620.5" fill="none" stroke="#2a2a2a" stroke-width="1.8"/><circle cx="624" cy="771" r="4.8" fill="none" stroke="#2a2a2a" stroke-width="2"/><path d="M627.5 774.5 L633 780.5" stroke="#2a2a2a" stroke-width="2.8"/><circle cx="657.7" cy="771.2" r="5.3" fill="none" stroke="#2a2a2a" stroke-width="1.9"/><path d="M661.3 775 L666 780.5" stroke="#2a2a2a" stroke-width="2.8"/><path d="M654.7 771.2 h6 M657.7 768.2 v6" stroke="#2a2a2a" stroke-width="1.3"/><circle cx="690.5" cy="771.2" r="5.3" fill="none" stroke="#2a2a2a" stroke-width="1.9"/><path d="M694.1 775 L698.8 780.5" stroke="#2a2a2a" stroke-width="2.8"/><path d="M687.5 771.2 h6" stroke="#2a2a2a" stroke-width="1.3"/><path d="M718.5 768.5 A7.8 7.8 0 1 0 723 765.8" fill="none" stroke="#2a2a2a" stroke-width="2"/><path d="M716 764 L723.5 764.5 L718.5 771 Z" fill="#2a2a2a"/><path d="M764.0 764.2 L770.8 768.1 L770.8 775.9 L764.0 779.8 L757.2 775.9 L757.2 768.1 Z M757.2 768.1 L764.0 772.0 L770.8 768.1 M764.0 772.0 L764.0 779.8" fill="none" stroke="#2a2a2a" stroke-width="1.3" stroke-linejoin="round"/><path d="M774 772 L769.5 769 V775 Z" fill="#2a2a2a"/><path d="M797.5 766.0 L804.0 769.7 L804.0 777.3 L797.5 781.0 L791.0 777.3 L791.0 769.7 Z M791.0 769.7 L797.5 773.5 L804.0 769.7 M797.5 773.5 L797.5 781.0" fill="none" stroke="#2a2a2a" stroke-width="1.3" stroke-linejoin="round"/><path d="M797.5 763.5 L795 767 H800 Z" fill="#2a2a2a"/><path d="M829.5 764.0 L836.0 767.7 L836.0 775.3 L829.5 779.0 L823.0 775.3 L823.0 767.7 Z M823.0 767.7 L829.5 771.5 L836.0 767.7 M829.5 771.5 L829.5 779.0" fill="none" stroke="#2a2a2a" stroke-width="1.3" stroke-linejoin="round"/><path d="M829.5 782 L827 778.5 H832 Z" fill="#2a2a2a"/><path d="M865.0 764.2 L871.8 768.1 L871.8 775.9 L865.0 779.8 L858.2 775.9 L858.2 768.1 Z M858.2 768.1 L865.0 772.0 L871.8 768.1 M865.0 772.0 L865.0 779.8" fill="none" stroke="#2a2a2a" stroke-width="1.3" stroke-linejoin="round"/><path d="M856 772 L860.5 769 V775 Z" fill="#2a2a2a"/><path d="M890.5 769.7 L897.0 773.5 L897.0 781.0 L890.5 777.3 Z" fill="#2a2a2a"/><path d="M897.0 766.0 L903.5 769.7 L903.5 777.3 L897.0 781.0 L890.5 777.3 L890.5 769.7 Z M890.5 769.7 L897.0 773.5 L903.5 769.7 M897.0 773.5 L897.0 781.0" fill="none" stroke="#2a2a2a" stroke-width="1.3" stroke-linejoin="round"/><path d="M936.5 769.7 L930.0 773.5 L930.0 781.0 L936.5 777.3 Z" fill="#2a2a2a"/><path d="M930.0 766.0 L936.5 769.7 L936.5 777.3 L930.0 781.0 L923.5 777.3 L923.5 769.7 Z M923.5 769.7 L930.0 773.5 L936.5 769.7 M930.0 773.5 L930.0 781.0" fill="none" stroke="#2a2a2a" stroke-width="1.3" stroke-linejoin="round"/><path d="M962.3 773 H970.8 V781.7 H962.3 Z M962.3 773 L980 765.5 L970.8 781.7 M970.8 773 L980 765.5" fill="none" stroke="#2a2a2a" stroke-width="1.4" stroke-linejoin="round"/><path d="M995.5 772 H1004.5 V781 H995.5 Z M1000 767.5 H1009 V776.5 H1000 Z M995.5 772 L1000 767.5 M1004.5 772 L1009 767.5 M1004.5 781 L1009 776.5 M995.5 781 L1000 776.5" fill="none" stroke="#2a2a2a" stroke-width="1.3"/><path d="M1042.4 764 V773.5 H1053 M1042.4 773.5 L1035 781.5" fill="none" stroke="#2a2a2a" stroke-width="1.1"/><circle cx="1042.4" cy="773.5" r="1.3" fill="#2a2a2a"/><path d="M1075 764 V773 H1086 M1075 766 h2.2 M1075 768.5 h2.2 M1075 771 h2.2 M1078.5 773 v-2 M1081 773 v-2 M1083.5 773 v-2" fill="none" stroke="#2a2a2a" stroke-width="1"/><path d="M1074 774 L1067 780.5" stroke="#2a2a2a" stroke-width="2.4" stroke-dasharray="1 1"/><text x="1077.5" y="786" font-size="9.5" font-family="Liberation Sans" fill="#2a2a2a">10</text><rect x="1103" y="768.8" width="12" height="10" fill="none" stroke="#2a2a2a" stroke-width="1.2" stroke-dasharray="2 1.3"/><path d="M1101.8 767.6 h2.4 v2.4 h-2.4z M1113.8 767.6 h2.4 v2.4 h-2.4z M1101.8 777.6 h2.4 v2.4 h-2.4z M1113.8 777.6 h2.4 v2.4 h-2.4z" fill="#2a2a2a"/></g></svg>
<div class="a" style="left:934px;top:796px;width:1px;height:1px;background:#a8a8a8;"></div>
<div class="a" style="left:530px;top:551px;width:1px;height:1px;background:#a8a8a8;"></div>
<div class="a" style="left:937px;top:796px;width:1px;height:1px;background:#a8a8a8;"></div>
<div class="a" style="left:530px;top:554px;width:1px;height:1px;background:#a8a8a8;"></div>
<div class="a" style="left:940px;top:796px;width:1px;height:1px;background:#a8a8a8;"></div>
<div class="a" style="left:530px;top:557px;width:1px;height:1px;background:#a8a8a8;"></div>
<div class="a" style="left:943px;top:796px;width:1px;height:1px;background:#a8a8a8;"></div>
<div class="a" style="left:530px;top:560px;width:1px;height:1px;background:#a8a8a8;"></div>
<div class="a" style="left:946px;top:796px;width:1px;height:1px;background:#a8a8a8;"></div>
<div class="a" style="left:530px;top:563px;width:1px;height:1px;background:#a8a8a8;"></div>
<div class="a" style="left:949px;top:796px;width:1px;height:1px;background:#a8a8a8;"></div>
<div class="a" style="left:530px;top:566px;width:1px;height:1px;background:#a8a8a8;"></div>
<div class="a t" style="left:537px;top:800.00px;font-size:13px;color:#000;letter-spacing:0.3px;line-height:20px;">Konsole</div>
<svg class="a" style="left:1076px;top:803px" width="12" height="12"><rect x="0.5" y="0.5" width="10" height="10" rx="2" fill="none" stroke="#6a6a6a" stroke-width="1"/><path d="M3 3 L8 8 M8 3 L3 8" stroke="#5a5a5a" stroke-width="1.8"/></svg>
<div class="a" style="left:533px;top:819px;width:556px;height:239px;background:#ffffff;border:1px solid #b4b4b4;box-sizing:border-box;"></div>
<div class="a t" style="left:538px;top:818.00px;font-size:13px;color:#000;letter-spacing:0.28px;line-height:20px;">Normalized tree has 35 elements!</div>
<div class="a t" style="left:538px;top:833.00px;font-size:13px;color:#000;letter-spacing:0.28px;line-height:20px;">Compile and preview finished.</div>
<div class="a t" style="left:538px;top:848.00px;font-size:13px;color:#000;letter-spacing:0.28px;line-height:20px;">Total rendering time: 0:00:00.041</div>
<div class="a t" style="left:538px;top:878.00px;font-size:13px;color:#000;letter-spacing:0.28px;line-height:20px;">Parsing design (AST generation)...</div>
<div class="a t" style="left:538px;top:893.00px;font-size:13px;color:#000;letter-spacing:0.28px;line-height:20px;">Compiling design (CSG Tree generation)...</div>
<div class="a t" style="left:538px;top:908.00px;font-size:13px;color:#000;letter-spacing:0.28px;line-height:20px;">Compiling design (CSG Products generation)...</div>
<div class="a t" style="left:538px;top:923.00px;font-size:13px;color:#000;letter-spacing:0.28px;line-height:20px;">Geometries in cache: 84</div>
<div class="a t" style="left:538px;top:938.00px;font-size:13px;color:#000;letter-spacing:0.28px;line-height:20px;">Geometry cache size in bytes: 15228600</div>
<div class="a t" style="left:538px;top:953.00px;font-size:13px;color:#000;letter-spacing:0.28px;line-height:20px;">CGAL Polyhedrons in cache: 0</div>
<div class="a t" style="left:538px;top:968.00px;font-size:13px;color:#000;letter-spacing:0.28px;line-height:20px;">CGAL cache size in bytes: 0</div>
<div class="a t" style="left:538px;top:983.00px;font-size:13px;color:#000;letter-spacing:0.28px;line-height:20px;">Compiling design (CSG Products normalization)...</div>
<div class="a t" style="left:538px;top:998.00px;font-size:13px;color:#000;letter-spacing:0.28px;line-height:20px;">Normalized tree has 35 elements!</div>
<div class="a t" style="left:538px;top:1013.00px;font-size:13px;color:#000;letter-spacing:0.28px;line-height:20px;">Compile and preview finished.</div>
<div class="a t" style="left:538px;top:1028.00px;font-size:13px;color:#000;letter-spacing:0.28px;line-height:20px;">Total rendering time: 0:00:00.038</div>
<div class="a" style="left:1074px;top:819px;width:15px;height:239px;background:#e3e3e3;border:1px solid #b4b4b4;box-sizing:border-box;"></div>
<div class="a" style="left:1074px;top:819px;width:15px;height:16px;background:linear-gradient(90deg,#fff,#f0f0f0);border:1px solid #b4b4b4;box-sizing:border-box;"></div>
<svg class="a" style="left:1076px;top:822px" width="12" height="10"><path d="M1.5 7 L6 2.5 L10.5 7 Z" fill="#555"/></svg>
<div class="a" style="left:1074px;top:1016px;width:15px;height:28px;background:linear-gradient(90deg,#fff,#ececec);border:1px solid #b4b4b4;box-sizing:border-box;"></div>
<div class="a" style="left:1074px;top:1043px;width:15px;height:15px;background:linear-gradient(90deg,#fff,#f0f0f0);border:1px solid #b4b4b4;box-sizing:border-box;"></div>
<svg class="a" style="left:1076px;top:1045px" width="12" height="10"><path d="M1.5 3 L6 7.5 L10.5 3 Z" fill="#555"/></svg>
<div class="a" style="left:1092px;top:922px;width:1px;height:1px;background:#a8a8a8;"></div>
<div class="a" style="left:1092px;top:925px;width:1px;height:1px;background:#a8a8a8;"></div>
<div class="a" style="left:1092px;top:928px;width:1px;height:1px;background:#a8a8a8;"></div>
<div class="a" style="left:1092px;top:931px;width:1px;height:1px;background:#a8a8a8;"></div>
<div class="a" style="left:1092px;top:934px;width:1px;height:1px;background:#a8a8a8;"></div>
<div class="a" style="left:1092px;top:937px;width:1px;height:1px;background:#a8a8a8;"></div>
<div class="a t" style="left:1099px;top:800.00px;font-size:13px;color:#000;letter-spacing:0.3px;line-height:20px;">Fehlerliste</div>
<svg class="a" style="left:1336px;top:804px" width="12" height="12"><rect x="0.5" y="0.5" width="10" height="10" rx="2" fill="none" stroke="#6a6a6a" stroke-width="1"/><path d="M3 3 L8 8 M8 3 L3 8" stroke="#5a5a5a" stroke-width="1.8"/></svg>
<div class="a t" style="left:1104px;top:830.50px;font-size:13px;color:#000;letter-spacing:0.3px;line-height:20px;">Anzeigen</div>
<div class="a" style="left:1166px;top:828px;width:120px;height:23px;background:linear-gradient(#fdfdfd,#f0f0f0);border:1px solid #b8b8b8;box-sizing:border-box;border-radius:3px;"></div>
<div class="a t" style="left:1171px;top:830.50px;font-size:13px;color:#000;letter-spacing:0.3px;line-height:20px;">Alles</div>
<svg class="a" style="left:1268px;top:835px" width="12" height="8"><path d="M1.5 1.5 L6 6 L10.5 1.5 Z" fill="#444"/></svg>
<div class="a" style="left:1104px;top:857px;width:236px;height:192px;background:#ffffff;border:1px solid #b4b4b4;box-sizing:border-box;"></div>
<div class="a" style="left:1105px;top:858px;width:234px;height:19px;background:linear-gradient(#fafafa,#ebebeb);"></div>
<div class="a" style="left:1105px;top:876px;width:234px;height:1px;background:#b8b8b8;"></div>
<div class="a" style="left:1184px;top:858px;width:1px;height:18px;background:#c8c8c8;"></div>
<div class="a t" style="left:1104.5px;top:858.00px;font-size:13px;color:#000;letter-spacing:0.3px;line-height:20px;width:80px;text-align:center;">Group</div>
<div class="a t" style="left:1210.0px;top:858.00px;font-size:13px;color:#000;letter-spacing:0.3px;line-height:20px;width:150px;text-align:center;">File</div>
<div class="a" style="left:1104px;top:1033px;width:236px;height:16px;background:#e3e3e3;border:1px solid #b4b4b4;box-sizing:border-box;"></div>
<div class="a" style="left:1104px;top:1033px;width:15px;height:16px;background:linear-gradient(#fff,#f0f0f0);border:1px solid #b4b4b4;box-sizing:border-box;"></div>
<div class="a" style="left:1118px;top:1033px;width:105px;height:16px;background:linear-gradient(#fff,#efefef);border:1px solid #b4b4b4;box-sizing:border-box;"></div>
<div class="a" style="left:1325px;top:1033px;width:15px;height:16px;background:linear-gradient(#fff,#f0f0f0);border:1px solid #b4b4b4;box-sizing:border-box;"></div>
<svg class="a" style="left:1106px;top:1035px" width="10" height="12"><path d="M7 1.5 L2.5 6 L7 10.5 Z" fill="#555"/></svg>
<svg class="a" style="left:1328px;top:1035px" width="10" height="12"><path d="M3 1.5 L7.5 6 L3 10.5 Z" fill="#555"/></svg>
<div class="a t" style="left:2.2px;top:1060.00px;font-size:13px;color:#000;letter-spacing:0.375px;line-height:20px;">Ansicht: Verschiebung = [ 68.23 31.40 29.40 ], Rotation = [ 54.30 0.00 57.90 ], Abstand = 263.43, Sichtfeld = 22.50 (816x698)</div>
<div class="a t" style="left:1718px;top:1060.00px;font-size:13px;color:#000;letter-spacing:0.15px;line-height:20px;width:200px;text-align:right;">OpenSCAD 2021.01</div>
<div class="a t" style="left:1359px;top:57.00px;font-size:13px;color:#000;letter-spacing:0.3px;line-height:20px;">Customizer</div>
<svg class="a" style="left:1906px;top:61px" width="12" height="12"><rect x="0.5" y="0.5" width="10" height="10" rx="2" fill="none" stroke="#6a6a6a" stroke-width="1"/><path d="M3 3 L8 8 M8 3 L3 8" stroke="#5a5a5a" stroke-width="1.8"/></svg>
<div class="a" style="left:1355px;top:84px;width:14px;height:14px;background:#ffffff;border:1px solid #b4b4b4;box-sizing:border-box;border-radius:1px;"></div>
<svg class="a" style="left:1356px;top:85px" width="12" height="12"><path d="M2 6 L5 10 L10 1.5" fill="none" stroke="#000" stroke-width="1.8"/></svg>
<div class="a t" style="left:1374px;top:82.00px;font-size:13px;color:#000;letter-spacing:0.3px;line-height:20px;">Automatische Vorschau</div>
<div class="a" style="left:1543px;top:80px;width:185px;height:23px;background:linear-gradient(#fdfdfd,#efefef);border:1px solid #b8b8b8;box-sizing:border-box;border-radius:3px;"></div>
<div class="a t" style="left:1548px;top:81.70px;font-size:13px;color:#000;letter-spacing:0.3px;line-height:20px;">Details anzeigen</div>
<svg class="a" style="left:1710px;top:87.5px" width="12" height="8"><path d="M1.5 1.5 L6 6 L10.5 1.5 Z" fill="#444"/></svg>
<div class="a" style="left:1732px;top:80px;width:184px;height:23px;background:linear-gradient(#fdfdfd,#efefef);border:1px solid #b8b8b8;box-sizing:border-box;border-radius:3px;"></div>
<div class="a t" style="left:1732.0px;top:81.70px;font-size:13px;color:#000;letter-spacing:0.3px;line-height:20px;width:184px;text-align:center;">Zurücksetzen</div>
<div class="a" style="left:1355px;top:107px;width:201px;height:26px;background:#ffffff;border:1px solid #b8b8b8;box-sizing:border-box;border-radius:3px;"></div>
<div class="a t" style="left:1359px;top:111.00px;font-size:13px;color:#000;letter-spacing:0.25px;line-height:20px;">Standardwerte des Designs</div>
<div class="a" style="left:1535px;top:108px;width:1px;height:24px;background:#d8d8d8;"></div>
<svg class="a" style="left:1539px;top:116px" width="12" height="8"><path d="M1.5 1.5 L6 6 L10.5 1.5 Z" fill="#444"/></svg>
<div class="a t" style="left:1558.0px;top:111.00px;font-size:13px;color:#000;letter-spacing:0.3px;line-height:20px;width:10px;text-align:center;">*</div>
<div class="a" style="left:1570px;top:107px;width:40px;height:26px;background:linear-gradient(#fdfdfd,#efefef);border:1px solid #b8b8b8;box-sizing:border-box;border-radius:3px;"></div>
<div class="a t" style="left:1570.0px;top:109.84px;font-size:14px;color:#000;letter-spacing:0.3px;line-height:20px;width:40px;text-align:center;">+</div>
<div class="a" style="left:1614px;top:107px;width:40px;height:26px;background:linear-gradient(#fdfdfd,#efefef);border:1px solid #b8b8b8;box-sizing:border-box;border-radius:3px;"></div>
<div class="a t" style="left:1614.0px;top:109.84px;font-size:14px;color:#000;letter-spacing:0.3px;line-height:20px;width:40px;text-align:center;">-</div>
<div class="a" style="left:1658px;top:107px;width:258px;height:26px;background:linear-gradient(#fdfdfd,#efefef);border:1px solid #b8b8b8;box-sizing:border-box;border-radius:3px;"></div>
<div class="a t" style="left:1658.0px;top:109.12px;font-size:16px;color:#000;letter-spacing:0.3px;line-height:20px;width:258px;text-align:center;"></div>
<div class="a t" style="left:1658.0px;top:108.94px;font-size:16.5px;color:#000;letter-spacing:0.2px;line-height:20px;width:258px;text-align:center;">aktuelle Voreinstellung speichern</div>
<div class="a" style="left:1355px;top:137px;width:562px;height:921px;background:#efefef;border:1px solid #c4c4c4;box-sizing:border-box;"></div>
<div class="a" style="left:1901px;top:138px;width:15px;height:919px;background:#e3e3e3;border:1px solid #b4b4b4;box-sizing:border-box;"></div>
<div class="a" style="left:1901px;top:138px;width:15px;height:16px;background:linear-gradient(90deg,#fff,#f0f0f0);border:1px solid #b4b4b4;box-sizing:border-box;"></div>
<svg class="a" style="left:1903px;top:141px" width="12" height="10"><path d="M1.5 7 L6 2.5 L10.5 7 Z" fill="#555"/></svg>
<div class="a" style="left:1901px;top:153px;width:15px;height:749px;background:linear-gradient(90deg,#fff,#ececec);border:1px solid #b4b4b4;box-sizing:border-box;"></div>
<div class="a" style="left:1901px;top:1041px;width:15px;height:16px;background:linear-gradient(90deg,#fff,#f0f0f0);border:1px solid #b4b4b4;box-sizing:border-box;"></div>
<svg class="a" style="left:1903px;top:1044px" width="12" height="10"><path d="M1.5 3 L6 7.5 L10.5 3 Z" fill="#555"/></svg>
<div class="a" style="left:1356px;top:138px;width:545px;height:23px;background:linear-gradient(#dedede,#d6d6d6);border:1px solid #b8b8b8;box-sizing:border-box;border-radius:2px;"></div>
<svg class="a" style="left:1362px;top:145.5px" width="10" height="8"><path d="M1 1.5 L5 6 L9 1.5 Z" fill="#555"/></svg>
<div class="a t" style="left:1377px;top:139.50px;font-size:13px;color:#000;letter-spacing:0.3px;line-height:20px;">General Box Setting</div>
<div class="a t" style="left:1360px;top:158.50px;font-size:13px;color:#000;letter-spacing:0.75px;line-height:20px;font-weight:bold;">generatePart</div>
<div class="a t" style="left:1360px;top:173.50px;font-size:13px;color:#000;letter-spacing:0.3px;line-height:20px;">Witch Part should be generated?</div>
<div class="a" style="left:1360px;top:191px;width:537px;height:23px;background:linear-gradient(#fdfdfd,#efefef);border:1px solid #b8b8b8;box-sizing:border-box;border-radius:3px;"></div>
<div class="a t" style="left:1365px;top:192.70px;font-size:13px;color:#000;letter-spacing:0.3px;line-height:20px;">All</div>
<svg class="a" style="left:1879px;top:198.5px" width="12" height="8"><path d="M1.5 1.5 L6 6 L10.5 1.5 Z" fill="#444"/></svg>
<div class="a t" style="left:1360px;top:211.70px;font-size:13px;color:#000;letter-spacing:0.75px;line-height:20px;font-weight:bold;">width</div>
<div class="a t" style="left:1360px;top:226.70px;font-size:13px;color:#000;letter-spacing:0.3px;line-height:20px;">Over all width of the box</div>
<div class="a" style="left:1839px;top:218.2px;width:58px;height:21px;background:#ffffff;border:1px solid #b8b8b8;box-sizing:border-box;border-radius:3px;"></div>
<div class="a" style="left:1882px;top:219.2px;width:14px;height:19px;background:linear-gradient(#fbfbfb,#ececec);"></div>
<div class="a" style="left:1881px;top:219.2px;width:1px;height:19px;background:#d0d0d0;"></div>
<svg class="a" style="left:1883px;top:220.2px" width="12" height="17"><path d="M2 6.5 L6 2.5 L10 6.5 Z M2 10.5 L6 14.5 L10 10.5 Z" fill="#555"/></svg>
<div class="a t" style="left:1817px;top:218.70px;font-size:13px;color:#000;letter-spacing:0.3px;line-height:20px;width:60px;text-align:right;">100</div>
<div class="a t" style="left:1360px;top:241.70px;font-size:13px;color:#000;letter-spacing:0.75px;line-height:20px;font-weight:bold;">height</div>
<div class="a t" style="left:1360px;top:256.70px;font-size:13px;color:#000;letter-spacing:0.3px;line-height:20px;">Over all height of the box</div>
<div class="a" style="left:1839px;top:248.2px;width:58px;height:21px;background:#ffffff;border:1px solid #b8b8b8;box-sizing:border-box;border-radius:3px;"></div>
<div class="a" style="left:1882px;top:249.2px;width:14px;height:19px;background:linear-gradient(#fbfbfb,#ececec);"></div>
<div class="a" style="left:1881px;top:249.2px;width:1px;height:19px;background:#d0d0d0;"></div>
<svg class="a" style="left:1883px;top:250.2px" width="12" height="17"><path d="M2 6.5 L6 2.5 L10 6.5 Z M2 10.5 L6 14.5 L10 10.5 Z" fill="#555"/></svg>
<div class="a t" style="left:1817px;top:248.70px;font-size:13px;color:#000;letter-spacing:0.3px;line-height:20px;width:60px;text-align:right;">30</div>
<div class="a t" style="left:1360px;top:271.70px;font-size:13px;color:#000;letter-spacing:0.75px;line-height:20px;font-weight:bold;">depth</div>
<div class="a t" style="left:1360px;top:286.70px;font-size:13px;color:#000;letter-spacing:0.3px;line-height:20px;">Over all depth of the box</div>
<div class="a" style="left:1839px;top:278.2px;width:58px;height:21px;background:#ffffff;border:1px solid #b8b8b8;box-sizing:border-box;border-radius:3px;"></div>
<div class="a" style="left:1882px;top:279.2px;width:14px;height:19px;background:linear-gradient(#fbfbfb,#ececec);"></div>
<div class="a" style="left:1881px;top:279.2px;width:1px;height:19px;background:#d0d0d0;"></div>
<svg class="a" style="left:1883px;top:280.2px" width="12" height="17"><path d="M2 6.5 L6 2.5 L10 6.5 Z M2 10.5 L6 14.5 L10 10.5 Z" fill="#555"/></svg>
<div class="a t" style="left:1817px;top:278.70px;font-size:13px;color:#000;letter-spacing:0.3px;line-height:20px;width:60px;text-align:right;">80</div>
<div class="a t" style="left:1360px;top:301.70px;font-size:13px;color:#000;letter-spacing:0.75px;line-height:20px;font-weight:bold;">caseThickness</div>
<div class="a t" style="left:1360px;top:316.70px;font-size:13px;color:#000;letter-spacing:0.3px;line-height:20px;">Thickness of the walls of the box minimum</div>
<div class="a" style="left:1839px;top:308.2px;width:58px;height:21px;background:#ffffff;border:1px solid #b8b8b8;box-sizing:border-box;border-radius:3px;"></div>
<div class="a" style="left:1882px;top:309.2px;width:14px;height:19px;background:linear-gradient(#fbfbfb,#ececec);"></div>
<div class="a" style="left:1881px;top:309.2px;width:1px;height:19px;background:#d0d0d0;"></div>
<svg class="a" style="left:1883px;top:310.2px" width="12" height="17"><path d="M2 6.5 L6 2.5 L10 6.5 Z M2 10.5 L6 14.5 L10 10.5 Z" fill="#555"/></svg>
<div class="a t" style="left:1817px;top:308.70px;font-size:13px;color:#000;letter-spacing:0.3px;line-height:20px;width:60px;text-align:right;">2</div>
<div class="a t" style="left:1360px;top:331.70px;font-size:13px;color:#000;letter-spacing:0.75px;line-height:20px;font-weight:bold;">bevelRadius</div>
<div class="a t" style="left:1360px;top:346.70px;font-size:13px;color:#000;letter-spacing:0.3px;line-height:20px;">Bevel on the edges of the box</div>
<div class="a" style="left:1839px;top:338.2px;width:58px;height:21px;background:#ffffff;border:1px solid #b8b8b8;box-sizing:border-box;border-radius:3px;"></div>
<div class="a" style="left:1882px;top:339.2px;width:14px;height:19px;background:linear-gradient(#fbfbfb,#ececec);"></div>
<div class="a" style="left:1881px;top:339.2px;width:1px;height:19px;background:#d0d0d0;"></div>
<svg class="a" style="left:1883px;top:340.2px" width="12" height="17"><path d="M2 6.5 L6 2.5 L10 6.5 Z M2 10.5 L6 14.5 L10 10.5 Z" fill="#555"/></svg>
<div class="a t" style="left:1817px;top:338.70px;font-size:13px;color:#000;letter-spacing:0.3px;line-height:20px;width:60px;text-align:right;">5</div>
<div class="a t" style="left:1360px;top:361.50px;font-size:13px;color:#000;letter-spacing:0.75px;line-height:20px;font-weight:bold;">connectionDistanceFront</div>
<div class="a t" style="left:1360px;top:376.00px;font-size:13px;color:#000;letter-spacing:0.33px;line-height:20px;">Where in the front should be the connection point between the front part and</div>
<div class="a t" style="left:1360px;top:390.50px;font-size:13px;color:#000;letter-spacing:0.33px;line-height:20px;">the back part. Suggestion bevelRadius+2</div>
<div class="a" style="left:1839px;top:374.5px;width:58px;height:21px;background:#ffffff;border:1px solid #b8b8b8;box-sizing:border-box;border-radius:3px;"></div>
<div class="a" style="left:1882px;top:375.5px;width:14px;height:19px;background:linear-gradient(#fbfbfb,#ececec);"></div>
<div class="a" style="left:1881px;top:375.5px;width:1px;height:19px;background:#d0d0d0;"></div>
<svg class="a" style="left:1883px;top:376.5px" width="12" height="17"><path d="M2 6.5 L6 2.5 L10 6.5 Z M2 10.5 L6 14.5 L10 10.5 Z" fill="#555"/></svg>
<div class="a t" style="left:1817px;top:375.00px;font-size:13px;color:#000;letter-spacing:0.3px;line-height:20px;width:60px;text-align:right;">7</div>
<div class="a t" style="left:1360px;top:405.50px;font-size:13px;color:#000;letter-spacing:0.75px;line-height:20px;font-weight:bold;">mountBrecketDepth</div>
<div class="a t" style="left:1360px;top:420.50px;font-size:13px;color:#000;letter-spacing:0.3px;line-height:20px;">Depth of the mounting plate</div>
<div class="a" style="left:1839px;top:412.0px;width:58px;height:21px;background:#ffffff;border:1px solid #b8b8b8;box-sizing:border-box;border-radius:3px;"></div>
<div class="a" style="left:1882px;top:413.0px;width:14px;height:19px;background:linear-gradient(#fbfbfb,#ececec);"></div>
<div class="a" style="left:1881px;top:413.0px;width:1px;height:19px;background:#d0d0d0;"></div>
<svg class="a" style="left:1883px;top:414.0px" width="12" height="17"><path d="M2 6.5 L6 2.5 L10 6.5 Z M2 10.5 L6 14.5 L10 10.5 Z" fill="#555"/></svg>
<div class="a t" style="left:1817px;top:412.50px;font-size:13px;color:#000;letter-spacing:0.3px;line-height:20px;width:60px;text-align:right;">20</div>
<div class="a t" style="left:1360px;top:435.50px;font-size:13px;color:#000;letter-spacing:0.75px;line-height:20px;font-weight:bold;">facePlateDepth</div>
<div class="a t" style="left:1360px;top:450.50px;font-size:13px;color:#000;letter-spacing:0.3px;line-height:20px;">Depth of the Faceplate</div>
<div class="a" style="left:1827px;top:442.0px;width:70px;height:21px;background:#ffffff;border:1px solid #b8b8b8;box-sizing:border-box;border-radius:3px;"></div>
<div class="a" style="left:1882px;top:443.0px;width:14px;height:19px;background:linear-gradient(#fbfbfb,#ececec);"></div>
<div class="a" style="left:1881px;top:443.0px;width:1px;height:19px;background:#d0d0d0;"></div>
<svg class="a" style="left:1883px;top:444.0px" width="12" height="17"><path d="M2 6.5 L6 2.5 L10 6.5 Z M2 10.5 L6 14.5 L10 10.5 Z" fill="#555"/></svg>
<div class="a t" style="left:1817px;top:442.50px;font-size:13px;color:#000;letter-spacing:0.3px;line-height:20px;width:60px;text-align:right;">0,5</div>
<div class="a" style="left:1356px;top:468px;width:545px;height:23px;background:linear-gradient(#dedede,#d6d6d6);border:1px solid #b8b8b8;box-sizing:border-box;border-radius:2px;"></div>
<svg class="a" style="left:1362px;top:475.5px" width="10" height="8"><path d="M1 1.5 L5 6 L9 1.5 Z" fill="#555"/></svg>
<div class="a t" style="left:1377px;top:469.50px;font-size:13px;color:#000;letter-spacing:0.3px;line-height:20px;">Top Font Settings</div>
<div class="a t" style="left:1360px;top:488.50px;font-size:13px;color:#000;letter-spacing:0.75px;line-height:20px;font-weight:bold;">topTextDepth</div>
<div class="a t" style="left:1360px;top:503.50px;font-size:13px;color:#000;letter-spacing:0.3px;line-height:20px;">Way to present the font</div>
<div class="a" style="left:1827px;top:495.0px;width:70px;height:21px;background:#ffffff;border:1px solid #b8b8b8;box-sizing:border-box;border-radius:3px;"></div>
<div class="a" style="left:1882px;top:496.0px;width:14px;height:19px;background:linear-gradient(#fbfbfb,#ececec);"></div>
<div class="a" style="left:1881px;top:496.0px;width:1px;height:19px;background:#d0d0d0;"></div>
<svg class="a" style="left:1883px;top:497.0px" width="12" height="17"><path d="M2 6.5 L6 2.5 L10 6.5 Z M2 10.5 L6 14.5 L10 10.5 Z" fill="#555"/></svg>
<div class="a t" style="left:1817px;top:495.50px;font-size:13px;color:#000;letter-spacing:0.3px;line-height:20px;width:60px;text-align:right;">0,3</div>
<div class="a t" style="left:1360px;top:518.50px;font-size:13px;color:#000;letter-spacing:0.75px;line-height:20px;font-weight:bold;">topTextFont</div>
<div class="a t" style="left:1360px;top:533.50px;font-size:13px;color:#000;letter-spacing:0.3px;line-height:20px;">Font to use on the Box</div>
<div class="a" style="left:1360px;top:551.5px;width:537px;height:22px;background:#ffffff;border:1px solid #b8b8b8;box-sizing:border-box;border-radius:3px;"></div>
<div class="a t" style="left:1363px;top:552.50px;font-size:13px;color:#000;letter-spacing:0.3px;line-height:20px;">Franklin Gothic Heavy:style=Standard</div>
<div class="a t" style="left:1360px;top:571.50px;font-size:13px;color:#000;letter-spacing:0.75px;line-height:20px;font-weight:bold;">topTextSize</div>
<div class="a t" style="left:1360px;top:586.50px;font-size:13px;color:#000;letter-spacing:0.3px;line-height:20px;">Font size front</div>
<div class="a" style="left:1839px;top:578.0px;width:58px;height:21px;background:#ffffff;border:1px solid #b8b8b8;box-sizing:border-box;border-radius:3px;"></div>
<div class="a" style="left:1882px;top:579.0px;width:14px;height:19px;background:linear-gradient(#fbfbfb,#ececec);"></div>
<div class="a" style="left:1881px;top:579.0px;width:1px;height:19px;background:#d0d0d0;"></div>
<svg class="a" style="left:1883px;top:580.0px" width="12" height="17"><path d="M2 6.5 L6 2.5 L10 6.5 Z M2 10.5 L6 14.5 L10 10.5 Z" fill="#555"/></svg>
<div class="a t" style="left:1817px;top:578.50px;font-size:13px;color:#000;letter-spacing:0.3px;line-height:20px;width:60px;text-align:right;">8</div>
<div class="a t" style="left:1360px;top:601.50px;font-size:13px;color:#000;letter-spacing:0.75px;line-height:20px;font-weight:bold;">topTextOffsetFront</div>
<div class="a t" style="left:1360px;top:616.50px;font-size:13px;color:#000;letter-spacing:0.3px;line-height:20px;">Offset of the Text from the Front</div>
<div class="a" style="left:1839px;top:608.0px;width:58px;height:21px;background:#ffffff;border:1px solid #b8b8b8;box-sizing:border-box;border-radius:3px;"></div>
<div class="a" style="left:1882px;top:609.0px;width:14px;height:19px;background:linear-gradient(#fbfbfb,#ececec);"></div>
<div class="a" style="left:1881px;top:609.0px;width:1px;height:19px;background:#d0d0d0;"></div>
<svg class="a" style="left:1883px;top:610.0px" width="12" height="17"><path d="M2 6.5 L6 2.5 L10 6.5 Z M2 10.5 L6 14.5 L10 10.5 Z" fill="#555"/></svg>
<div class="a t" style="left:1817px;top:608.50px;font-size:13px;color:#000;letter-spacing:0.3px;line-height:20px;width:60px;text-align:right;">9</div>
<div class="a t" style="left:1360px;top:631.50px;font-size:13px;color:#000;letter-spacing:0.75px;line-height:20px;font-weight:bold;">topTextFirst</div>
<div class="a t" style="left:1360px;top:646.50px;font-size:13px;color:#000;letter-spacing:0.3px;line-height:20px;">Text on Top first Connector</div>
<div class="a" style="left:1360px;top:664.5px;width:537px;height:22px;background:#ffffff;border:1px solid #b8b8b8;box-sizing:border-box;border-radius:3px;"></div>
<div class="a t" style="left:1363px;top:665.50px;font-size:13px;color:#000;letter-spacing:0.3px;line-height:20px;">All</div>
<div class="a t" style="left:1360px;top:684.50px;font-size:13px;color:#000;letter-spacing:0.75px;line-height:20px;font-weight:bold;">topTextSecond</div>
<div class="a" style="left:1360px;top:702.5px;width:537px;height:22px;background:#ffffff;border:1px solid #b8b8b8;box-sizing:border-box;border-radius:3px;"></div>
<div class="a t" style="left:1363px;top:703.50px;font-size:13px;color:#000;letter-spacing:0.3px;line-height:20px;">Connectors</div>
<div class="a t" style="left:1360px;top:722.50px;font-size:13px;color:#000;letter-spacing:0.75px;line-height:20px;font-weight:bold;">topTextThird</div>
<div class="a" style="left:1360px;top:740.5px;width:537px;height:22px;background:#ffffff;border:1px solid #b8b8b8;box-sizing:border-box;border-radius:3px;"></div>
<div class="a t" style="left:1363px;top:741.50px;font-size:13px;color:#000;letter-spacing:0.3px;line-height:20px;">are</div>
<div class="a t" style="left:1360px;top:760.50px;font-size:13px;color:#000;letter-spacing:0.75px;line-height:20px;font-weight:bold;">topTextFourth</div>
<div class="a" style="left:1360px;top:778.5px;width:537px;height:22px;background:#ffffff;border:1px solid #b8b8b8;box-sizing:border-box;border-radius:3px;"></div>
<div class="a t" style="left:1363px;top:779.50px;font-size:13px;color:#000;letter-spacing:0.3px;line-height:20px;">Beautiful</div>
<div class="a" style="left:1356px;top:801px;width:545px;height:23px;background:linear-gradient(#dedede,#d6d6d6);border:1px solid #b8b8b8;box-sizing:border-box;border-radius:2px;"></div>
<svg class="a" style="left:1362px;top:808.5px" width="10" height="8"><path d="M1 1.5 L5 6 L9 1.5 Z" fill="#555"/></svg>
<div class="a t" style="left:1377px;top:802.50px;font-size:13px;color:#000;letter-spacing:0.3px;line-height:20px;">Front Font Settings</div>
<div class="a t" style="left:1360px;top:821.50px;font-size:13px;color:#000;letter-spacing:0.75px;line-height:20px;font-weight:bold;">frontTextDepth</div>
<div class="a t" style="left:1360px;top:836.50px;font-size:13px;color:#000;letter-spacing:0.3px;line-height:20px;">Way to present the font</div>
<div class="a" style="left:1827px;top:828.0px;width:70px;height:21px;background:#ffffff;border:1px solid #b8b8b8;box-sizing:border-box;border-radius:3px;"></div>
<div class="a" style="left:1882px;top:829.0px;width:14px;height:19px;background:linear-gradient(#fbfbfb,#ececec);"></div>
<div class="a" style="left:1881px;top:829.0px;width:1px;height:19px;background:#d0d0d0;"></div>
<svg class="a" style="left:1883px;top:830.0px" width="12" height="17"><path d="M2 6.5 L6 2.5 L10 6.5 Z M2 10.5 L6 14.5 L10 10.5 Z" fill="#555"/></svg>
<div class="a t" style="left:1817px;top:828.50px;font-size:13px;color:#000;letter-spacing:0.3px;line-height:20px;width:60px;text-align:right;">0,3</div>
<div class="a t" style="left:1360px;top:851.50px;font-size:13px;color:#000;letter-spacing:0.75px;line-height:20px;font-weight:bold;">frontTextFont</div>
<div class="a t" style="left:1360px;top:866.50px;font-size:13px;color:#000;letter-spacing:0.3px;line-height:20px;">Font to use on the Box</div>
<div class="a" style="left:1360px;top:884.5px;width:537px;height:22px;background:#ffffff;border:1px solid #b8b8b8;box-sizing:border-box;border-radius:3px;"></div>
<div class="a t" style="left:1363px;top:885.50px;font-size:13px;color:#000;letter-spacing:0.3px;line-height:20px;">Franklin Gothic Heavy:style=Standard</div>
<div class="a t" style="left:1360px;top:904.50px;font-size:13px;color:#000;letter-spacing:0.75px;line-height:20px;font-weight:bold;">frontTextSize</div>
<div class="a t" style="left:1360px;top:919.50px;font-size:13px;color:#000;letter-spacing:0.3px;line-height:20px;">Font size front</div>
<div class="a" style="left:1839px;top:911.0px;width:58px;height:21px;background:#ffffff;border:1px solid #b8b8b8;box-sizing:border-box;border-radius:3px;"></div>
<div class="a" style="left:1882px;top:912.0px;width:14px;height:19px;background:linear-gradient(#fbfbfb,#ececec);"></div>
<div class="a" style="left:1881px;top:912.0px;width:1px;height:19px;background:#d0d0d0;"></div>
<svg class="a" style="left:1883px;top:913.0px" width="12" height="17"><path d="M2 6.5 L6 2.5 L10 6.5 Z M2 10.5 L6 14.5 L10 10.5 Z" fill="#555"/></svg>
<div class="a t" style="left:1817px;top:911.50px;font-size:13px;color:#000;letter-spacing:0.3px;line-height:20px;width:60px;text-align:right;">3</div>
<div class="a t" style="left:1360px;top:934.50px;font-size:13px;color:#000;letter-spacing:0.75px;line-height:20px;font-weight:bold;">frontTextSameHeight</div>
<div class="a t" style="left:1360px;top:949.50px;font-size:13px;color:#000;letter-spacing:0.33px;line-height:20px;">Vertical Offset for Text. Should it be on the same Height in the front. Unchecked =</div>
<div class="a t" style="left:1360px;top:964.00px;font-size:13px;color:#000;letter-spacing:0.33px;line-height:20px;">Height is dependend on the height of the connector.</div>
<div class="a" style="left:1876px;top:949px;width:21px;height:20px;background:#ffffff;border:1px solid #b8b8b8;box-sizing:border-box;border-radius:2px;"></div>
<div class="a t" style="left:1360px;top:978.50px;font-size:13px;color:#000;letter-spacing:0.75px;line-height:20px;font-weight:bold;">frontTextOffset</div>
<div class="a t" style="left:1360px;top:993.50px;font-size:13px;color:#000;letter-spacing:0.3px;line-height:20px;">Vertical Offset of the text in front.</div>
<div class="a" style="left:1839px;top:985.0px;width:58px;height:21px;background:#ffffff;border:1px solid #b8b8b8;box-sizing:border-box;border-radius:3px;"></div>
<div class="a" style="left:1882px;top:986.0px;width:14px;height:19px;background:linear-gradient(#fbfbfb,#ececec);"></div>
<div class="a" style="left:1881px;top:986.0px;width:1px;height:19px;background:#d0d0d0;"></div>
<svg class="a" style="left:1883px;top:987.0px" width="12" height="17"><path d="M2 6.5 L6 2.5 L10 6.5 Z M2 10.5 L6 14.5 L10 10.5 Z" fill="#555"/></svg>
<div class="a t" style="left:1817px;top:985.50px;font-size:13px;color:#000;letter-spacing:0.3px;line-height:20px;width:60px;text-align:right;">4</div>
<div class="a" style="left:1356px;top:1011px;width:545px;height:23px;background:linear-gradient(#f8f8f8,#ececec);border:1px solid #b8b8b8;box-sizing:border-box;border-radius:2px;"></div>
<svg class="a" style="left:1363px;top:1017.5px" width="8" height="10"><path d="M1.5 1 L6 5 L1.5 9 Z" fill="#555"/></svg>
<div class="a t" style="left:1377px;top:1012.50px;font-size:13px;color:#000;letter-spacing:0.3px;line-height:20px;">Feet Settings</div>
<div class="a" style="left:1356px;top:1034px;width:545px;height:23px;background:linear-gradient(#f8f8f8,#ececec);border:1px solid #b8b8b8;box-sizing:border-box;border-radius:2px;"></div>
<svg class="a" style="left:1363px;top:1040.5px" width="8" height="10"><path d="M1.5 1 L6 5 L1.5 9 Z" fill="#555"/></svg>
<div class="a t" style="left:1377px;top:1035.50px;font-size:13px;color:#000;letter-spacing:0.3px;line-height:20px;">Usb-A Socket Informations</div>
</body></html>
